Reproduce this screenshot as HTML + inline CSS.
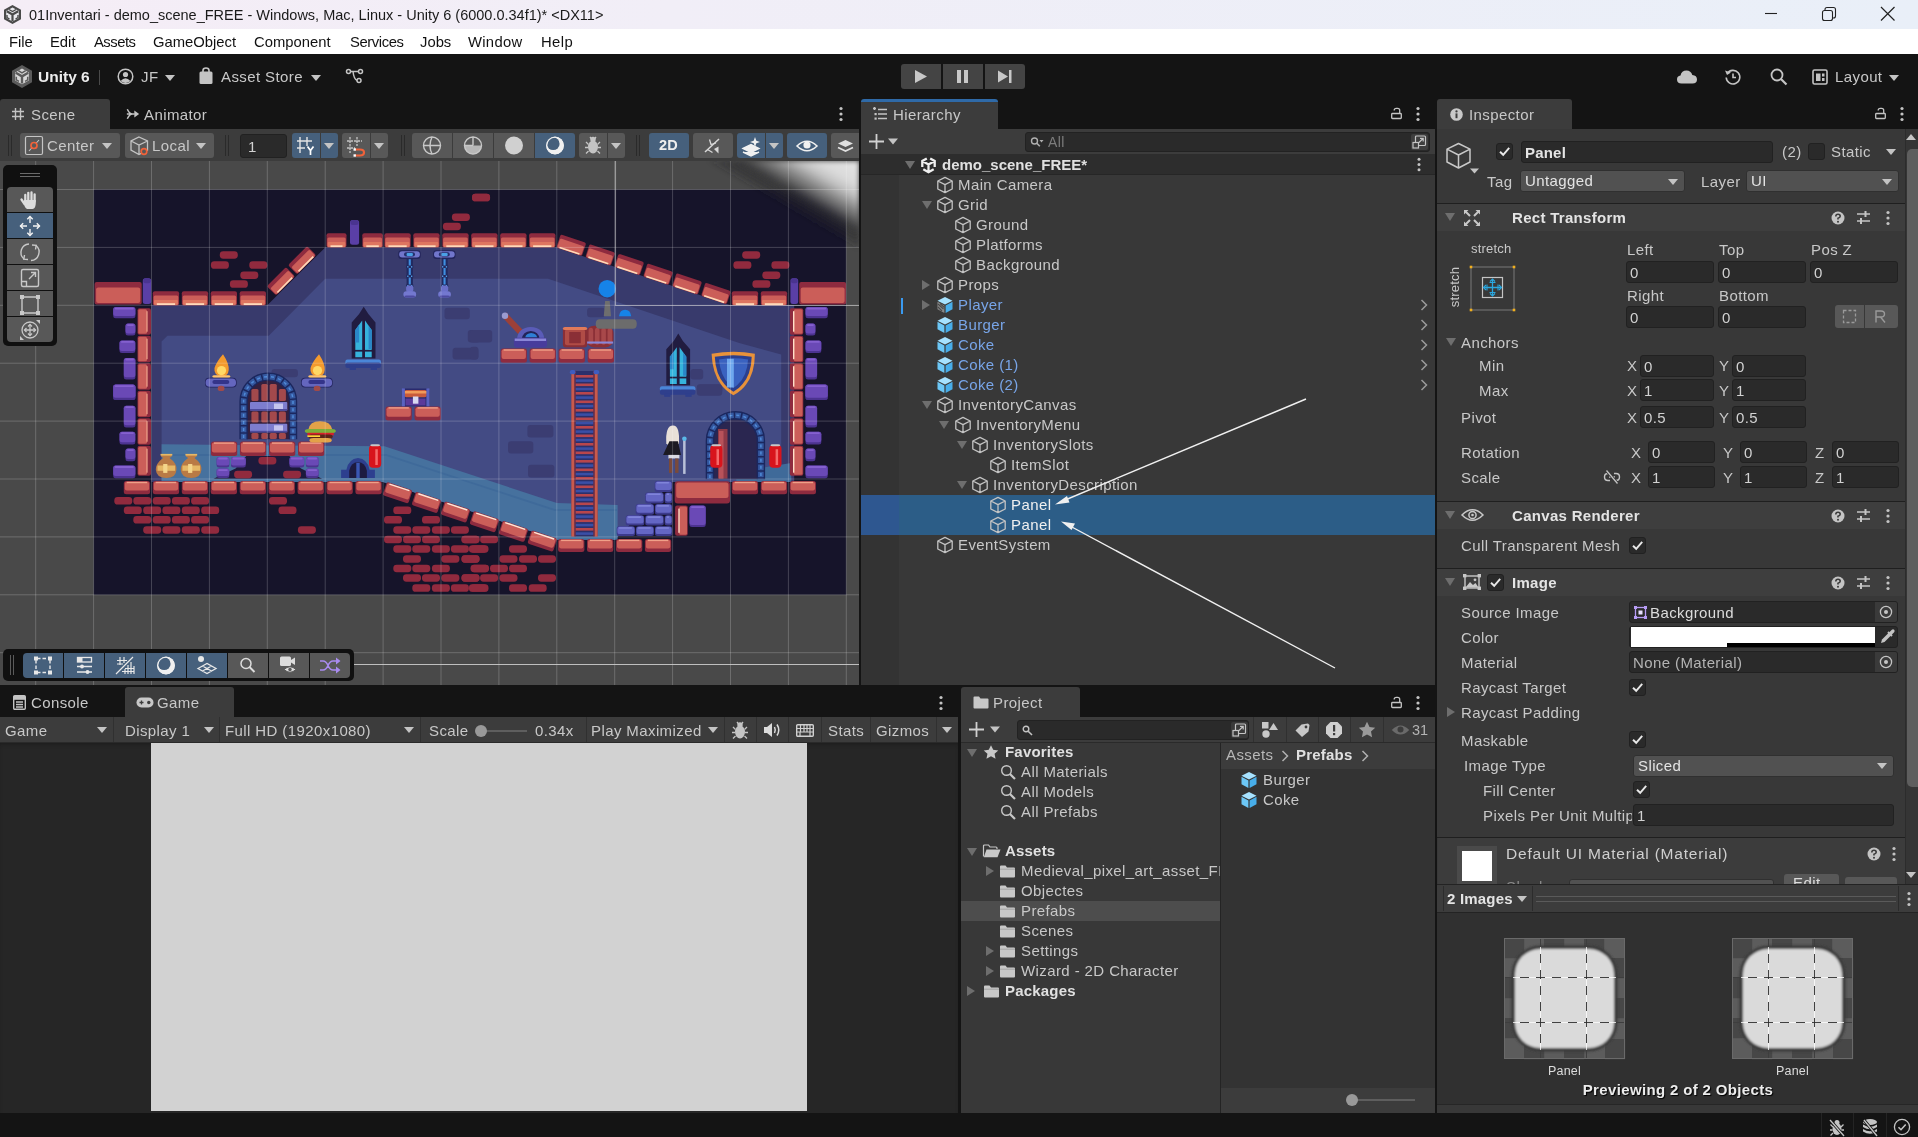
<!DOCTYPE html>
<html><head><meta charset="utf-8"><title>Unity</title>
<style>
*{box-sizing:border-box;margin:0;padding:0}
html,body{width:1918px;height:1137px;overflow:hidden;background:#141414}
body{position:relative;font-family:"Liberation Sans",sans-serif;font-size:15px;color:#c8c8c8;letter-spacing:.4px;line-height:20px}
.a{position:absolute}
.t{position:absolute;white-space:pre;height:20px;line-height:20px}
.b{font-weight:700;letter-spacing:.2px}
.btn{position:absolute;background:#585858;border-radius:3px}
.btn.on{background:#46607c}
.inp{position:absolute;background:#2a2a2a;border:1px solid #212121;border-radius:3px;height:22px;line-height:21px;padding-left:3px;white-space:pre;color:#d2d2d2}
.dd{position:absolute;background:#515151;border:1px solid #303030;border-radius:3px;height:22px;line-height:20px;padding-left:4px;white-space:pre;color:#e4e4e4}
.chk{position:absolute;width:17px;height:17px;background:#2a2a2a;border:1px solid #212121;border-radius:3px}
.tri-d{position:absolute;width:0;height:0;border-left:5px solid transparent;border-right:5px solid transparent;border-top:6px solid #c4c4c4}
.fold-d{position:absolute;width:0;height:0;margin-left:1px;border-left:5px solid transparent;border-right:5px solid transparent;border-top:8px solid #6e6e6e}
.fold-r{position:absolute;width:0;height:0;margin-top:1px;border-top:5px solid transparent;border-bottom:5px solid transparent;border-left:8px solid #6e6e6e}
svg{position:absolute;overflow:visible}
#root{position:absolute;left:0;top:0;width:1918px;height:1137px;overflow:hidden;will-change:transform}
</style></head><body><div id="root">
<!-- title bar -->
<div class="a" style="left:0;top:0;width:1918px;height:29px;background:linear-gradient(90deg,#f5edf6 0%,#f1eef7 35%,#e9eff8 100%)"></div>
<svg style="left:2px;top:4px" width="21" height="21" viewBox="0 0 21 21"><path d="M10.5 1 L19 5.8 V15.2 L10.5 20 L2 15.2 V5.8 Z" fill="#4a4a4a"/><path d="M10.5 3.5 L16.8 7 V14 L10.5 17.5 L4.2 14 V7 Z" fill="#e9e9ee"/><path d="M10.5 10.5 V17 M10.5 10.5 L4.8 7.3 M10.5 10.5 L16.2 7.3" stroke="#4a4a4a" stroke-width="2.2" fill="none"/><path d="M7 5.5 L10.5 7.5 L14 5.5 M5 11 V13.6 L7.5 15 M16 11 V13.6 L13.5 15" stroke="#4a4a4a" stroke-width="1.4" fill="none"/></svg>
<div class="t" style="left:29px;top:5px;font-size:14.5px;letter-spacing:0;color:#1a1a1a">01Inventari - demo_scene_FREE - Windows, Mac, Linux - Unity 6 (6000.0.34f1)* &lt;DX11&gt;</div>
<svg style="left:1760px;top:4px" width="140" height="20" viewBox="0 0 140 20"><path d="M5 9.5 H17" stroke="#222" stroke-width="1.1" fill="none"/><rect x="62.5" y="6.5" width="10" height="10" rx="2" stroke="#222" stroke-width="1.1" fill="none"/><path d="M65 6.5 V5.5 Q65 3.5 67 3.5 H73.5 Q75.5 3.5 75.5 5.5 V12 Q75.5 14 73.5 14 H72.5" stroke="#222" stroke-width="1.1" fill="none"/><path d="M121 3 L134.5 16.5 M134.5 3 L121 16.5" stroke="#222" stroke-width="1.2" fill="none"/></svg>
<!-- menu bar -->
<div class="a" style="left:0;top:29px;width:1918px;height:25px;background:#fff"></div>
<div class="a" style="left:0;top:32px;height:20px;font-size:14.8px;letter-spacing:0;color:#111">
<span class="t" style="left:9px">File</span><span class="t" style="left:50px">Edit</span><span class="t" style="left:94px;letter-spacing:-.5px">Assets</span><span class="t" style="left:153px">GameObject</span><span class="t" style="left:254px">Component</span><span class="t" style="left:350px;letter-spacing:-.4px">Services</span><span class="t" style="left:420px">Jobs</span><span class="t" style="left:468px;letter-spacing:.3px">Window</span><span class="t" style="left:541px;letter-spacing:.4px">Help</span>
</div>
<!-- main toolbar -->
<div class="a" style="left:0;top:54px;width:1918px;height:46px;background:#141414"></div>
<svg style="left:11px;top:64px" width="22" height="25" viewBox="0 0 22 25"><path d="M11 1 L21 6.7 V18.3 L11 24 L1 18.3 V6.7 Z" fill="#5b5b5b"/><path d="M11 4.5 L17.8 8.4 V16.4 L11 20.3 L4.2 16.4 V8.4 Z" fill="#d8d8d8"/><path d="M11 12.4 V19.6 M11 12.4 L4.8 8.8 M11 12.4 L17.2 8.8" stroke="#5b5b5b" stroke-width="2.4" fill="none"/><path d="M7.3 6.6 L11 8.8 L14.7 6.6 M5.3 12.8 V15.9 L8 17.4 M16.7 12.8 V15.9 L14 17.4" stroke="#5b5b5b" stroke-width="1.5" fill="none"/></svg>
<div class="t b" style="left:38px;top:67px;color:#ececec;font-size:15.5px;letter-spacing:0">Unity 6</div>
<div class="a" style="left:99px;top:70px;width:1px;height:15px;background:#4a4a4a"></div>
<svg style="left:117px;top:68px" width="17" height="17" viewBox="0 0 17 17"><circle cx="8.5" cy="8.5" r="7.3" stroke="#c4c4c4" stroke-width="1.5" fill="none"/><circle cx="8.5" cy="6.5" r="2.6" fill="#c4c4c4"/><path d="M3.6 13 Q8.5 7.5 13.4 13 Q8.5 17 3.6 13Z" fill="#c4c4c4"/></svg>
<div class="t" style="left:141px;top:67px">JF</div><div class="tri-d" style="left:165px;top:75px"></div>
<svg style="left:198px;top:66px" width="16" height="20" viewBox="0 0 16 20"><path d="M5 6 V4.5 Q5 2 8 2 Q11 2 11 4.5 V6" stroke="#c4c4c4" stroke-width="1.6" fill="none"/><rect x="1.5" y="5.5" width="13" height="12.5" rx="1.5" fill="#c4c4c4"/></svg>
<div class="t" style="left:221px;top:67px">Asset Store</div><div class="tri-d" style="left:311px;top:75px"></div>
<svg style="left:345px;top:67px" width="20" height="18" viewBox="0 0 20 18"><g stroke="#c4c4c4" stroke-width="1.5" fill="none"><circle cx="3.5" cy="4.5" r="2"/><circle cx="15.5" cy="4.5" r="2"/><circle cx="14" cy="13.5" r="2"/><path d="M5.5 4.5 H13.5 M8 4.5 Q9 12.5 12 13.3"/></g></svg>
<!-- play controls -->
<div class="a" style="left:901px;top:64px;width:40px;height:25px;background:#444;border-radius:3px 0 0 3px"></div>
<div class="a" style="left:943px;top:64px;width:40px;height:25px;background:#444"></div>
<div class="a" style="left:985px;top:64px;width:40px;height:25px;background:#444;border-radius:0 3px 3px 0"></div>
<svg style="left:901px;top:64px" width="124" height="25" viewBox="0 0 124 25"><path d="M14 6 L26 12.5 L14 19Z" fill="#c8c8c8"/><rect x="56" y="6" width="4" height="13" fill="#c8c8c8"/><rect x="63" y="6" width="4" height="13" fill="#c8c8c8"/><path d="M97 6.5 L107 12.5 L97 18.5Z" fill="#c8c8c8"/><rect x="108" y="6" width="2.5" height="13" fill="#c8c8c8"/></svg>
<!-- right icons -->
<svg style="left:1676px;top:69px" width="22" height="16" viewBox="0 0 22 16"><path d="M5.5 14.5 Q1 14.5 1 10.5 Q1 7 4.5 6.6 Q5.5 1.5 10.5 1.5 Q15 1.5 16.3 6 Q21 6.3 21 10.5 Q21 14.5 16.5 14.5Z" fill="#c4c4c4"/></svg>
<svg style="left:1722px;top:66px" width="22" height="22" viewBox="0 0 22 22"><path d="M5.2 7.6 A6.8 6.8 0 1 1 4.2 11.5" stroke="#c4c4c4" stroke-width="1.6" fill="none"/><path d="M3 4.5 L5 9 L9 6.500Z" fill="#c4c4c4"/><path d="M11 7.5 V11.5 H14" stroke="#c4c4c4" stroke-width="1.6" fill="none"/></svg>
<svg style="left:1769px;top:67px" width="20" height="20" viewBox="0 0 20 20"><circle cx="8" cy="8" r="5.5" stroke="#c4c4c4" stroke-width="1.8" fill="none"/><path d="M12 12 L17.5 17.5" stroke="#c4c4c4" stroke-width="2.2"/></svg>
<svg style="left:1812px;top:69px" width="16" height="16" viewBox="0 0 16 16"><rect x="1" y="1" width="14" height="14" rx="1.5" stroke="#c4c4c4" stroke-width="1.6" fill="none"/><rect x="4" y="4.5" width="4.5" height="7.5" fill="#c4c4c4"/><rect x="10" y="4.5" width="2.5" height="3" fill="#c4c4c4"/><rect x="10" y="9" width="2.5" height="3" fill="#c4c4c4"/></svg>
<div class="t" style="left:1835px;top:67px">Layout</div><div class="tri-d" style="left:1889px;top:75px"></div>
<!-- scene panel -->
<div class="a" style="left:0;top:99px;width:859px;height:30px;background:#141414"></div>
<div class="a" style="left:0;top:99px;width:110px;height:31px;background:#3c3c3c;border-radius:3px 3px 0 0"></div>
<svg style="left:11px;top:107px" width="14" height="14" viewBox="0 0 14 14"><path d="M4.5 1 V13 M9.5 1 V13 M1 4.5 H13 M1 9.5 H13" stroke="#c4c4c4" stroke-width="1.4" fill="none"/></svg>
<div class="t" style="left:31px;top:105px">Scene</div>
<svg style="left:126px;top:108px" width="14" height="12" viewBox="0 0 16 13"><path d="M1 6.5 H10 M1.5 1 Q4 6.5 7.5 6.5 M1.5 12 Q4 6.5 7.5 6.5" stroke="#c4c4c4" stroke-width="1.7" fill="none"/><path d="M9.5 2.5 L15 6.5 L9.5 10.5Z" fill="#c4c4c4"/></svg>
<div class="t" style="left:144px;top:105px">Animator</div>
<svg style="left:839px;top:106px" width="4" height="16" viewBox="0 0 4 16"><circle cx="2" cy="2.5" r="1.6" fill="#c4c4c4"/><circle cx="2" cy="8" r="1.6" fill="#c4c4c4"/><circle cx="2" cy="13.5" r="1.6" fill="#c4c4c4"/></svg>
<div class="a" style="left:0;top:129px;width:859px;height:32px;background:#3c3c3c"></div>
<div class="a" style="left:8px;top:135px;width:1px;height:21px;background:#2a2a2a"></div><div class="a" style="left:11px;top:135px;width:1px;height:21px;background:#2a2a2a"></div>
<div class="a" style="left:225px;top:135px;width:1px;height:21px;background:#2a2a2a"></div><div class="a" style="left:228px;top:135px;width:1px;height:21px;background:#2a2a2a"></div>
<div class="a" style="left:401px;top:135px;width:1px;height:21px;background:#2a2a2a"></div><div class="a" style="left:404px;top:135px;width:1px;height:21px;background:#2a2a2a"></div>
<div class="a" style="left:636px;top:135px;width:1px;height:21px;background:#2a2a2a"></div><div class="a" style="left:639px;top:135px;width:1px;height:21px;background:#2a2a2a"></div>
<div class="btn" style="left:20px;top:133px;width:100px;height:25px;border-radius:3px"></div>
<div class="btn" style="left:125px;top:133px;width:89px;height:25px;border-radius:3px"></div>
<div class="inp" style="left:240px;top:134px;width:47px;height:24px;line-height:23px;padding-left:7px">1</div>
<div class="btn on" style="left:292px;top:133px;width:28px;height:25px;border-radius:3px 0 0 3px"></div>
<div class="btn on" style="left:321px;top:133px;width:17px;height:25px;border-radius:0 3px 3px 0"></div>
<div class="btn" style="left:342px;top:133px;width:28px;height:25px;border-radius:3px 0 0 3px"></div>
<div class="btn" style="left:371px;top:133px;width:17px;height:25px;border-radius:0 3px 3px 0"></div>
<div class="btn" style="left:412px;top:133px;width:40px;height:25px;border-radius:3px 0 0 3px"></div>
<div class="btn" style="left:453px;top:133px;width:40px;height:25px;border-radius:0"></div>
<div class="btn" style="left:494px;top:133px;width:40px;height:25px;border-radius:0"></div>
<div class="btn on" style="left:535px;top:133px;width:40px;height:25px;border-radius:0 3px 3px 0"></div>
<div class="btn" style="left:579px;top:133px;width:28px;height:25px;border-radius:3px 0 0 3px"></div>
<div class="btn" style="left:608px;top:133px;width:17px;height:25px;border-radius:0 3px 3px 0"></div>
<div class="btn on" style="left:649px;top:133px;width:40px;height:25px;border-radius:3px"></div>
<div class="btn" style="left:693px;top:133px;width:40px;height:25px;border-radius:3px"></div>
<div class="btn on" style="left:737px;top:133px;width:28px;height:25px;border-radius:3px 0 0 3px"></div>
<div class="btn on" style="left:766px;top:133px;width:17px;height:25px;border-radius:0 3px 3px 0"></div>
<div class="btn on" style="left:787px;top:133px;width:40px;height:25px;border-radius:3px"></div>
<div class="btn" style="left:831px;top:133px;width:28px;height:25px;border-radius:3px 0 0 3px"></div>
<div class="t" style="left:47px;top:136px;color:#c8c8c8">Center</div><div class="tri-d" style="left:102px;top:143px"></div>
<div class="t" style="left:152px;top:136px;color:#c8c8c8">Local</div><div class="tri-d" style="left:196px;top:143px"></div>
<div class="tri-d" style="left:324px;top:143px"></div>
<div class="tri-d" style="left:374px;top:143px"></div>
<div class="tri-d" style="left:611px;top:143px"></div>
<div class="tri-d" style="left:769px;top:143px"></div>
<div class="t b" style="left:659px;top:135px;color:#eee;font-size:14.5px">2D</div>
<svg style="left:0;top:129px" width="859" height="32" viewBox="0 129 859 32">
<rect x="25.5" y="136.5" width="17" height="18" rx="1.5" stroke="#c4c4c4" stroke-width="1.2" fill="none"/><path d="M29 151 L39 140" stroke="#c4c4c4" stroke-width="1.1"/><circle cx="34" cy="145.5" r="3" stroke="#f0623a" stroke-width="1.7" fill="#585858"/>
<path d="M139 137 L147.5 141 V150 L139 154.5 L131 150 V141 Z M131 141 L139 145 L147.5 141 M139 145 V154.5" stroke="#c4c4c4" stroke-width="1.3" fill="none"/><circle cx="144" cy="151.5" r="2.8" stroke="#f0623a" stroke-width="1.7" fill="#585858"/>
<path d="M300 137 V153 M307 137 V146 M297 141 H312 M297 148 H305" stroke="#e4e4e4" stroke-width="1.4" fill="none"/><path d="M307.5 146.5 L310.5 150.5 L313.5 146.5 M310.5 150.5 V155" stroke="#fff" stroke-width="1.7" fill="none"/>
<path d="M350 137 V153 M357 137 V146 M347 141 H362 M347 148 H355" stroke="#c4c4c4" stroke-width="1.3" stroke-dasharray="2.5 1" fill="none"/><path d="M355 149.5 H360 Q364 149.5 364 152.5 Q364 155.5 360 155.5 H355" stroke="#f0623a" stroke-width="2.2" fill="none"/><rect x="353.5" y="148.3" width="2.4" height="2.4" fill="#fff"/><rect x="353.5" y="154.3" width="2.4" height="2.4" fill="#fff"/>
<g stroke="#c8c8c8" stroke-width="1.4" fill="none"><circle cx="432" cy="145.5" r="8.5"/><path d="M423.5 145.5 H440.5 M432 137 Q428 145.5 432 154"/>
<circle cx="473" cy="145.5" r="8.5"/><path d="M464.5 145.5 H473 M473 137 V145.5"/></g><path d="M473 145.5 H481.5 A8.5 8.5 0 0 1 464.5 145.5 H473Z" fill="#c8c8c8" opacity=".85"/>
<circle cx="514" cy="145.5" r="9" fill="#d0d0d0"/>
<circle cx="555" cy="145.5" r="8.8" fill="#f0f0f0"/><circle cx="553.2" cy="143.7" r="6.4" fill="#46607c"/><circle cx="555" cy="145.5" r="8.3" stroke="#f0f0f0" stroke-width="1.2" fill="none"/>
<ellipse cx="593" cy="147" rx="5" ry="6.5" fill="#c4c4c4"/><circle cx="593" cy="139.5" r="2.7" fill="#c4c4c4"/><path d="M586 142 L588.5 144.5 M600 142 L597.5 144.5 M585 147.5 H588 M601 147.5 H598 M586 153.5 L588.5 151 M600 153.5 L597.5 151 M590 137 L591.5 139 M596 137 L594.5 139" stroke="#c4c4c4" stroke-width="1.3"/>
<path d="M705 152 L719 139" stroke="#d8d8d8" stroke-width="1.5"/><path d="M709.5 139.5 L711 144.5 L716 143 M707.5 149.5 L712.5 152.5" stroke="#d8d8d8" stroke-width="1.3" fill="none"/><path d="M714 149 L718.5 146.5 V153.500Z" fill="#d8d8d8"/>
<path d="M743 148.5 L751 144.5 L759 148.5 L751 152.500Z M743 152 L751 156 L759 152" stroke="#f0f0f0" stroke-width="1.4" fill="#f0f0f0"/><path d="M755 137 L756.3 140.7 L760 142 L756.3 143.3 L755 147 L753.7 143.3 L750 142 L753.7 140.700Z" fill="#f0f0f0"/>
<path d="M797 146 Q807 136.5 817 146 Q807 155.5 797 146Z" stroke="#f0f0f0" stroke-width="1.6" fill="none"/><circle cx="807" cy="145" r="3.6" fill="#f0f0f0"/>
<path d="M838 143.5 L845.5 140 L853 143.5 L845.5 147Z" fill="#e0e0e0"/><path d="M838 147.5 L845.5 151 L853 147.5" stroke="#e0e0e0" stroke-width="1.7" fill="none"/>
</svg>
<div class="a" style="left:0;top:161px;width:859px;height:524px;background:#494949;overflow:hidden">
<svg style="left:0;top:0" width="859" height="524" viewBox="0 161 859 524">
<defs><filter id="bl" x="-50%" y="-50%" width="200%" height="200%"><feGaussianBlur stdDeviation="12"/></filter><filter id="bl2" x="-10%" y="-10%" width="120%" height="120%"><feGaussianBlur stdDeviation="2.5"/></filter></defs>
<rect x="93.6" y="189.5" width="752.7" height="405.3" fill="#16142a"/>
<polygon points="151.5,305.3 267.3,305.3 325.2,247.4 556.8,247.4 730.5,305.3 794.2,305.3 794.2,481.9 730.5,481.9 672.6,481.9 614.7,539.8 556.8,539.8 383.1,481.9 151.5,481.9" fill="#383a6c"/>
<polygon points="167.4,335.7 268.7,335.7 325.2,278.7 548.1,278.7 739.2,342.9 781.2,354.5 781.2,481.9 672.6,481.9 614.7,539.8 556.8,539.8 383.1,481.9 161.6,481.9 161.6,341.5" fill="#434b84"/>
<polygon points="161.6,444.3 384.5,446.3 556.8,503 617.6,505.1 617.6,539.8 556.8,539.8 383.1,481.9 161.6,481.9" fill="#46719e"/>
<path d="M161.6 455H386L555 510H617" stroke="#3f6a9a" stroke-width="1.8" fill="none"/>
<polygon points="736.3,471.8 791.3,463.1 791.3,481.9 736.3,481.9" fill="#3f6a99"/>
<rect x="444.5" y="307.7" width="25.3" height="11.6" fill="#3b3d72" rx="3"/>
<rect x="467.8" y="329.9" width="12.2" height="12.7" fill="#3b3d72" rx="3"/>
<rect x="452.6" y="347.8" width="25.7" height="11.6" fill="#3b3d72" rx="3"/>
<rect x="271.5" y="368.9" width="26.4" height="8.4" fill="#3b3d72" rx="3"/>
<rect x="470" y="329.9" width="22.2" height="12.7" fill="#3b3d72" rx="3"/>
<rect x="470" y="346.8" width="8.4" height="12.7" fill="#3b3d72" rx="3"/>
<rect x="587.1" y="307.7" width="17.9" height="9.5" fill="#3b3d72" rx="3"/>
<rect x="690.5" y="368.9" width="12.7" height="10.6" fill="#3b3d72" rx="3"/>
<rect x="696.9" y="384.8" width="25.3" height="8.4" fill="#3b3d72" rx="3"/>
<rect x="527.4" y="425" width="26" height="12.5" fill="#3b3d72" rx="3"/>
<rect x="508" y="441.2" width="25.3" height="12.2" fill="#3b3d72" rx="3"/>
<rect x="528" y="464.8" width="26.4" height="12.7" fill="#3b3d72" rx="3"/>
<rect x="696.9" y="384.2" width="25.3" height="11.6" fill="#3b3d72" rx="3"/>
<rect x="219.8" y="251.2" width="18" height="7.5" fill="#912a3e" rx="3.4"/>
<rect x="210.9" y="261.3" width="18" height="7.5" fill="#912a3e" rx="3.4"/>
<rect x="249.3" y="261.3" width="18" height="7.5" fill="#912a3e" rx="3.4"/>
<rect x="240.3" y="271.4" width="18" height="7.5" fill="#912a3e" rx="3.4"/>
<rect x="229.9" y="280.3" width="18" height="7.5" fill="#912a3e" rx="3.4"/>
<rect x="451.9" y="213.4" width="18" height="7.5" fill="#912a3e" rx="3.4"/>
<rect x="442.9" y="222.7" width="18" height="7.5" fill="#912a3e" rx="3.4"/>
<rect x="472" y="193.8" width="18" height="7.5" fill="#912a3e" rx="3.4"/>
<rect x="472.1" y="193.8" width="18" height="7.5" fill="#912a3e" rx="3.4"/>
<rect x="742.2" y="251.2" width="18" height="7.5" fill="#912a3e" rx="3.4"/>
<rect x="733.4" y="261.3" width="18" height="7.5" fill="#912a3e" rx="3.4"/>
<rect x="771.4" y="261.3" width="18" height="7.5" fill="#912a3e" rx="3.4"/>
<rect x="762.3" y="271.4" width="18" height="7.5" fill="#912a3e" rx="3.4"/>
<rect x="752.4" y="280.3" width="18" height="7.5" fill="#912a3e" rx="3.4"/>
<rect x="114.3" y="497.1" width="18" height="7.5" fill="#912a3e" rx="3.4"/>
<rect x="133.3" y="497.1" width="18" height="7.5" fill="#912a3e" rx="3.4"/>
<rect x="152.7" y="497.1" width="18" height="7.5" fill="#912a3e" rx="3.4"/>
<rect x="171.9" y="497.1" width="18" height="7.5" fill="#912a3e" rx="3.4"/>
<rect x="191.1" y="497.1" width="18" height="7.5" fill="#912a3e" rx="3.4"/>
<rect x="123.8" y="506.6" width="18" height="7.5" fill="#912a3e" rx="3.4"/>
<rect x="143.2" y="506.6" width="18" height="7.5" fill="#912a3e" rx="3.4"/>
<rect x="162.4" y="506.6" width="18" height="7.5" fill="#912a3e" rx="3.4"/>
<rect x="181.8" y="506.6" width="18" height="7.5" fill="#912a3e" rx="3.4"/>
<rect x="201.2" y="506.6" width="18" height="7.5" fill="#912a3e" rx="3.4"/>
<rect x="133.3" y="516.1" width="18" height="7.5" fill="#912a3e" rx="3.4"/>
<rect x="152.7" y="516.1" width="18" height="7.5" fill="#912a3e" rx="3.4"/>
<rect x="171.9" y="516.1" width="18" height="7.5" fill="#912a3e" rx="3.4"/>
<rect x="191.1" y="516.1" width="18" height="7.5" fill="#912a3e" rx="3.4"/>
<rect x="143.2" y="526.2" width="18" height="7.5" fill="#912a3e" rx="3.4"/>
<rect x="162.4" y="526.2" width="18" height="7.5" fill="#912a3e" rx="3.4"/>
<rect x="181.8" y="526.2" width="18" height="7.5" fill="#912a3e" rx="3.4"/>
<rect x="201.2" y="526.2" width="18" height="7.5" fill="#912a3e" rx="3.4"/>
<rect x="269" y="497.1" width="18" height="7.5" fill="#912a3e" rx="3.4"/>
<rect x="278.5" y="506.6" width="18" height="7.5" fill="#912a3e" rx="3.4"/>
<rect x="297.9" y="526.2" width="18" height="7.5" fill="#912a3e" rx="3.4"/>
<rect x="393.3" y="506.6" width="18" height="7.5" fill="#912a3e" rx="3.4"/>
<rect x="384" y="516.1" width="18" height="7.5" fill="#912a3e" rx="3.4"/>
<rect x="422" y="516.1" width="18" height="7.5" fill="#912a3e" rx="3.4"/>
<rect x="393.3" y="526.2" width="18" height="7.5" fill="#912a3e" rx="3.4"/>
<rect x="412.3" y="526.2" width="18" height="7.5" fill="#912a3e" rx="3.4"/>
<rect x="431.9" y="526.2" width="18" height="7.5" fill="#912a3e" rx="3.4"/>
<rect x="450.9" y="526.2" width="18" height="7.5" fill="#912a3e" rx="3.4"/>
<rect x="384" y="535.7" width="18" height="7.5" fill="#912a3e" rx="3.4"/>
<rect x="403" y="535.7" width="18" height="7.5" fill="#912a3e" rx="3.4"/>
<rect x="422" y="535.7" width="18" height="7.5" fill="#912a3e" rx="3.4"/>
<rect x="461.4" y="535.7" width="18" height="7.5" fill="#912a3e" rx="3.4"/>
<rect x="393.3" y="545.2" width="18" height="7.5" fill="#912a3e" rx="3.4"/>
<rect x="412.3" y="545.2" width="18" height="7.5" fill="#912a3e" rx="3.4"/>
<rect x="431.9" y="545.2" width="18" height="7.5" fill="#912a3e" rx="3.4"/>
<rect x="450.9" y="545.2" width="18" height="7.5" fill="#912a3e" rx="3.4"/>
<rect x="470.5" y="545.2" width="18" height="7.5" fill="#912a3e" rx="3.4"/>
<rect x="403" y="555.2" width="18" height="7.5" fill="#912a3e" rx="3.4"/>
<rect x="441.4" y="555.2" width="18" height="7.5" fill="#912a3e" rx="3.4"/>
<rect x="461.4" y="555.2" width="18" height="7.5" fill="#912a3e" rx="3.4"/>
<rect x="393.3" y="564.7" width="18" height="7.5" fill="#912a3e" rx="3.4"/>
<rect x="412.3" y="564.7" width="18" height="7.5" fill="#912a3e" rx="3.4"/>
<rect x="431.9" y="564.7" width="18" height="7.5" fill="#912a3e" rx="3.4"/>
<rect x="470.5" y="564.7" width="18" height="7.5" fill="#912a3e" rx="3.4"/>
<rect x="403" y="574.2" width="18" height="7.5" fill="#912a3e" rx="3.4"/>
<rect x="422" y="574.2" width="18" height="7.5" fill="#912a3e" rx="3.4"/>
<rect x="441.4" y="574.2" width="18" height="7.5" fill="#912a3e" rx="3.4"/>
<rect x="461.4" y="574.2" width="18" height="7.5" fill="#912a3e" rx="3.4"/>
<rect x="412.3" y="584.3" width="18" height="7.5" fill="#912a3e" rx="3.4"/>
<rect x="431.9" y="584.3" width="18" height="7.5" fill="#912a3e" rx="3.4"/>
<rect x="450.9" y="584.3" width="18" height="7.5" fill="#912a3e" rx="3.4"/>
<rect x="470.5" y="584.3" width="18" height="7.5" fill="#912a3e" rx="3.4"/>
<rect x="461.6" y="535.7" width="18" height="7.5" fill="#912a3e" rx="3.4"/>
<rect x="480.1" y="535.7" width="18" height="7.5" fill="#912a3e" rx="3.4"/>
<rect x="468.9" y="545.2" width="18" height="7.5" fill="#912a3e" rx="3.4"/>
<rect x="509" y="545.2" width="18" height="7.5" fill="#912a3e" rx="3.4"/>
<rect x="461.6" y="555.2" width="18" height="7.5" fill="#912a3e" rx="3.4"/>
<rect x="499.5" y="555.2" width="18" height="7.5" fill="#912a3e" rx="3.4"/>
<rect x="519" y="555.2" width="18" height="7.5" fill="#912a3e" rx="3.4"/>
<rect x="538" y="555.2" width="18" height="7.5" fill="#912a3e" rx="3.4"/>
<rect x="471.1" y="564.7" width="18" height="7.5" fill="#912a3e" rx="3.4"/>
<rect x="490" y="564.7" width="18" height="7.5" fill="#912a3e" rx="3.4"/>
<rect x="509" y="564.7" width="18" height="7.5" fill="#912a3e" rx="3.4"/>
<rect x="461.6" y="574.2" width="18" height="7.5" fill="#912a3e" rx="3.4"/>
<rect x="480.1" y="574.2" width="18" height="7.5" fill="#912a3e" rx="3.4"/>
<rect x="499.5" y="574.2" width="18" height="7.5" fill="#912a3e" rx="3.4"/>
<rect x="538" y="574.2" width="18" height="7.5" fill="#912a3e" rx="3.4"/>
<rect x="468.9" y="584.3" width="18" height="7.5" fill="#912a3e" rx="3.4"/>
<rect x="509" y="584.3" width="18" height="7.5" fill="#912a3e" rx="3.4"/>
<rect x="528.7" y="584.3" width="18" height="7.5" fill="#912a3e" rx="3.4"/>
<rect x="258.4" y="457" width="18" height="7.5" fill="#912a3e" rx="3.4"/>
<rect x="234.1" y="470.7" width="18" height="7.5" fill="#912a3e" rx="3.4"/>
<rect x="283.1" y="470.7" width="18" height="7.5" fill="#912a3e" rx="3.4"/>
<rect x="94.6" y="282" width="47.1" height="22.6" fill="#8e2b3f" rx="2"/>
<rect x="96.1" y="287.5" width="44.1" height="15.6" fill="#cb5e59" rx="2"/>
<rect x="799.2" y="282" width="46.9" height="22.6" fill="#8e2b3f" rx="2"/>
<rect x="800.7" y="287.5" width="43.9" height="15.6" fill="#cb5e59" rx="2"/>
<rect x="142.8" y="278.2" width="8.4" height="25.7" fill="#5a3fa6" rx="2.5"/>
<rect x="143.3" y="278.2" width="7.4" height="5" fill="#4a3490" rx="2.5"/>
<rect x="350" y="220.1" width="9.1" height="24.7" fill="#5a3fa6" rx="2.5"/>
<rect x="350.5" y="220.1" width="8.1" height="5" fill="#4a3490" rx="2.5"/>
<rect x="790.4" y="278.2" width="7.8" height="25.7" fill="#5a3fa6" rx="2.5"/>
<rect x="790.9" y="278.2" width="6.8" height="5" fill="#4a3490" rx="2.5"/>
<rect x="152.8" y="291.2" width="26.3" height="14.2" fill="#8e2b3f" rx="2"/>
<rect x="153.6" y="295.4" width="24.7" height="9.4" fill="#cb5e59" rx="1.5"/>
<rect x="154" y="299.9" width="23.9" height="4.9" fill="#de7560" rx="1"/>
<rect x="156.8" y="303.2" width="18.3" height="1.8" fill="#ffd9b8"/>
<rect x="181.8" y="291.2" width="26.3" height="14.2" fill="#8e2b3f" rx="2"/>
<rect x="182.6" y="295.4" width="24.7" height="9.4" fill="#cb5e59" rx="1.5"/>
<rect x="182.9" y="299.9" width="23.9" height="4.9" fill="#de7560" rx="1"/>
<rect x="185.8" y="303.2" width="18.3" height="1.8" fill="#ffd9b8"/>
<rect x="210.7" y="291.2" width="26.3" height="14.2" fill="#8e2b3f" rx="2"/>
<rect x="211.5" y="295.4" width="24.7" height="9.4" fill="#cb5e59" rx="1.5"/>
<rect x="211.9" y="299.9" width="23.9" height="4.9" fill="#de7560" rx="1"/>
<rect x="214.7" y="303.2" width="18.3" height="1.8" fill="#ffd9b8"/>
<rect x="239.7" y="291.2" width="26.3" height="14.2" fill="#8e2b3f" rx="2"/>
<rect x="240.5" y="295.4" width="24.7" height="9.4" fill="#cb5e59" rx="1.5"/>
<rect x="240.8" y="299.9" width="23.9" height="4.9" fill="#de7560" rx="1"/>
<rect x="243.7" y="303.2" width="18.3" height="1.8" fill="#ffd9b8"/>
<rect x="326.5" y="233.3" width="20" height="14.2" fill="#8e2b3f" rx="2"/>
<rect x="327.3" y="237.5" width="18.4" height="9.4" fill="#cb5e59" rx="1.5"/>
<rect x="327.7" y="242" width="17.6" height="4.9" fill="#de7560" rx="1"/>
<rect x="330.5" y="245.3" width="12" height="1.8" fill="#ffd9b8"/>
<rect x="362.3" y="233.3" width="20.5" height="14.2" fill="#8e2b3f" rx="2"/>
<rect x="363.1" y="237.5" width="18.9" height="9.4" fill="#cb5e59" rx="1.5"/>
<rect x="363.5" y="242" width="18.1" height="4.9" fill="#de7560" rx="1"/>
<rect x="366.3" y="245.3" width="12.5" height="1.8" fill="#ffd9b8"/>
<rect x="384.4" y="233.3" width="26.3" height="14.2" fill="#8e2b3f" rx="2"/>
<rect x="385.2" y="237.5" width="24.7" height="9.4" fill="#cb5e59" rx="1.5"/>
<rect x="385.6" y="242" width="23.9" height="4.9" fill="#de7560" rx="1"/>
<rect x="388.4" y="245.3" width="18.3" height="1.8" fill="#ffd9b8"/>
<rect x="413.3" y="233.3" width="26.3" height="14.2" fill="#8e2b3f" rx="2"/>
<rect x="414.1" y="237.5" width="24.7" height="9.4" fill="#cb5e59" rx="1.5"/>
<rect x="414.5" y="242" width="23.9" height="4.9" fill="#de7560" rx="1"/>
<rect x="417.3" y="245.3" width="18.3" height="1.8" fill="#ffd9b8"/>
<rect x="442.3" y="233.3" width="26.3" height="14.2" fill="#8e2b3f" rx="2"/>
<rect x="443.1" y="237.5" width="24.7" height="9.4" fill="#cb5e59" rx="1.5"/>
<rect x="443.5" y="242" width="23.9" height="4.9" fill="#de7560" rx="1"/>
<rect x="446.3" y="245.3" width="18.3" height="1.8" fill="#ffd9b8"/>
<rect x="471.2" y="233.3" width="26.3" height="14.2" fill="#8e2b3f" rx="2"/>
<rect x="472" y="237.5" width="24.7" height="9.4" fill="#cb5e59" rx="1.5"/>
<rect x="472.4" y="242" width="23.9" height="4.9" fill="#de7560" rx="1"/>
<rect x="475.2" y="245.3" width="18.3" height="1.8" fill="#ffd9b8"/>
<rect x="500.2" y="233.3" width="26.3" height="14.2" fill="#8e2b3f" rx="2"/>
<rect x="501" y="237.5" width="24.7" height="9.4" fill="#cb5e59" rx="1.5"/>
<rect x="501.4" y="242" width="23.9" height="4.9" fill="#de7560" rx="1"/>
<rect x="504.2" y="245.3" width="18.3" height="1.8" fill="#ffd9b8"/>
<rect x="529.1" y="233.3" width="26.3" height="14.2" fill="#8e2b3f" rx="2"/>
<rect x="529.9" y="237.5" width="24.7" height="9.4" fill="#cb5e59" rx="1.5"/>
<rect x="530.4" y="242" width="23.9" height="4.9" fill="#de7560" rx="1"/>
<rect x="533.1" y="245.3" width="18.3" height="1.8" fill="#ffd9b8"/>
<rect x="731.8" y="291.2" width="26.3" height="14.2" fill="#8e2b3f" rx="2"/>
<rect x="732.6" y="295.4" width="24.7" height="9.4" fill="#cb5e59" rx="1.5"/>
<rect x="733" y="299.9" width="23.9" height="4.9" fill="#de7560" rx="1"/>
<rect x="735.8" y="303.2" width="18.3" height="1.8" fill="#ffd9b8"/>
<rect x="760.8" y="291.2" width="26.3" height="14.2" fill="#8e2b3f" rx="2"/>
<rect x="761.5" y="295.4" width="24.7" height="9.4" fill="#cb5e59" rx="1.5"/>
<rect x="762" y="299.9" width="23.9" height="4.9" fill="#de7560" rx="1"/>
<rect x="764.8" y="303.2" width="18.3" height="1.8" fill="#ffd9b8"/>
<g transform="translate(281 281.3) rotate(-45)">
<rect x="-13.5" y="-6.5" width="27" height="13" fill="#8e2b3f" rx="2"/>
<rect x="-12.7" y="-2.5" width="25.4" height="8.5" fill="#cb5e59" rx="1.5"/>
<rect x="-10.5" y="4.5" width="21" height="1.7" fill="#ffd9b8"/>
</g>
<g transform="translate(302.1 260.2) rotate(-45)">
<rect x="-13.5" y="-6.5" width="27" height="13" fill="#8e2b3f" rx="2"/>
<rect x="-12.7" y="-2.5" width="25.4" height="8.5" fill="#cb5e59" rx="1.5"/>
<rect x="-10.5" y="4.5" width="21" height="1.7" fill="#ffd9b8"/>
</g>
<g transform="translate(571.3 245.2) rotate(18.4)">
<rect x="-13.5" y="-7" width="27" height="14" fill="#8e2b3f" rx="2"/>
<rect x="-12.7" y="-3" width="25.4" height="9.5" fill="#cb5e59" rx="1.5"/>
<rect x="-10.5" y="5" width="21" height="1.7" fill="#ffd9b8"/>
</g>
<g transform="translate(600.2 254.9) rotate(18.4)">
<rect x="-13.5" y="-7" width="27" height="14" fill="#8e2b3f" rx="2"/>
<rect x="-12.7" y="-3" width="25.4" height="9.5" fill="#cb5e59" rx="1.5"/>
<rect x="-10.5" y="5" width="21" height="1.7" fill="#ffd9b8"/>
</g>
<g transform="translate(629.2 264.6) rotate(18.4)">
<rect x="-13.5" y="-7" width="27" height="14" fill="#8e2b3f" rx="2"/>
<rect x="-12.7" y="-3" width="25.4" height="9.5" fill="#cb5e59" rx="1.5"/>
<rect x="-10.5" y="5" width="21" height="1.7" fill="#ffd9b8"/>
</g>
<g transform="translate(658.1 274.2) rotate(18.4)">
<rect x="-13.5" y="-7" width="27" height="14" fill="#8e2b3f" rx="2"/>
<rect x="-12.7" y="-3" width="25.4" height="9.5" fill="#cb5e59" rx="1.5"/>
<rect x="-10.5" y="5" width="21" height="1.7" fill="#ffd9b8"/>
</g>
<g transform="translate(687.1 283.9) rotate(18.4)">
<rect x="-13.5" y="-7" width="27" height="14" fill="#8e2b3f" rx="2"/>
<rect x="-12.7" y="-3" width="25.4" height="9.5" fill="#cb5e59" rx="1.5"/>
<rect x="-10.5" y="5" width="21" height="1.7" fill="#ffd9b8"/>
</g>
<g transform="translate(716 293.5) rotate(18.4)">
<rect x="-13.5" y="-7" width="27" height="14" fill="#8e2b3f" rx="2"/>
<rect x="-12.7" y="-3" width="25.4" height="9.5" fill="#cb5e59" rx="1.5"/>
<rect x="-10.5" y="5" width="21" height="1.7" fill="#ffd9b8"/>
</g>
<rect x="137.5" y="308.2" width="13.5" height="26.5" fill="#8e2b3f" rx="2"/>
<rect x="138.3" y="309.2" width="8.7" height="24.5" fill="#cb5e59" rx="1.5"/>
<rect x="146.4" y="311.2" width="1.2" height="20.5" fill="#f0a58c"/>
<rect x="789.8" y="308.2" width="13.5" height="26.5" fill="#8e2b3f" rx="2"/>
<rect x="793.8" y="309.2" width="8.7" height="24.5" fill="#cb5e59" rx="1.5"/>
<rect x="793" y="311.2" width="1.4" height="20.5" fill="#ffe0c8"/>
<rect x="137.5" y="335.7" width="13.5" height="26.5" fill="#8e2b3f" rx="2"/>
<rect x="138.3" y="336.7" width="8.7" height="24.5" fill="#cb5e59" rx="1.5"/>
<rect x="146.4" y="338.7" width="1.2" height="20.5" fill="#f0a58c"/>
<rect x="789.8" y="335.7" width="13.5" height="26.5" fill="#8e2b3f" rx="2"/>
<rect x="793.8" y="336.7" width="8.7" height="24.5" fill="#cb5e59" rx="1.5"/>
<rect x="793" y="338.7" width="1.4" height="20.5" fill="#ffe0c8"/>
<rect x="137.5" y="363.2" width="13.5" height="26.5" fill="#8e2b3f" rx="2"/>
<rect x="138.3" y="364.2" width="8.7" height="24.5" fill="#cb5e59" rx="1.5"/>
<rect x="146.4" y="366.2" width="1.2" height="20.5" fill="#f0a58c"/>
<rect x="789.8" y="363.2" width="13.5" height="26.5" fill="#8e2b3f" rx="2"/>
<rect x="793.8" y="364.2" width="8.7" height="24.5" fill="#cb5e59" rx="1.5"/>
<rect x="793" y="366.2" width="1.4" height="20.5" fill="#ffe0c8"/>
<rect x="137.5" y="390.7" width="13.5" height="26.5" fill="#8e2b3f" rx="2"/>
<rect x="138.3" y="391.7" width="8.7" height="24.5" fill="#cb5e59" rx="1.5"/>
<rect x="146.4" y="393.7" width="1.2" height="20.5" fill="#f0a58c"/>
<rect x="789.8" y="390.7" width="13.5" height="26.5" fill="#8e2b3f" rx="2"/>
<rect x="793.8" y="391.7" width="8.7" height="24.5" fill="#cb5e59" rx="1.5"/>
<rect x="793" y="393.7" width="1.4" height="20.5" fill="#ffe0c8"/>
<rect x="137.5" y="418.2" width="13.5" height="26.5" fill="#8e2b3f" rx="2"/>
<rect x="138.3" y="419.2" width="8.7" height="24.5" fill="#cb5e59" rx="1.5"/>
<rect x="146.4" y="421.2" width="1.2" height="20.5" fill="#f0a58c"/>
<rect x="789.8" y="418.2" width="13.5" height="26.5" fill="#8e2b3f" rx="2"/>
<rect x="793.8" y="419.2" width="8.7" height="24.5" fill="#cb5e59" rx="1.5"/>
<rect x="793" y="421.2" width="1.4" height="20.5" fill="#ffe0c8"/>
<rect x="137.5" y="445.7" width="13.5" height="30" fill="#8e2b3f" rx="2"/>
<rect x="138.3" y="446.7" width="8.7" height="28" fill="#cb5e59" rx="1.5"/>
<rect x="146.4" y="448.7" width="1.2" height="24" fill="#f0a58c"/>
<rect x="789.8" y="445.7" width="13.5" height="30" fill="#8e2b3f" rx="2"/>
<rect x="793.8" y="446.7" width="8.7" height="28" fill="#cb5e59" rx="1.5"/>
<rect x="793" y="448.7" width="1.4" height="24" fill="#ffe0c8"/>
<rect x="113.2" y="307.1" width="22.2" height="11.2" fill="#4c3390" rx="2.5"/>
<rect x="113.2" y="307.1" width="22.2" height="9" fill="#6a49b6" rx="2.5"/>
<rect x="114.7" y="307.7" width="19.2" height="1.8" fill="#8560cf" rx="1"/>
<rect x="125.5" y="323.6" width="9.9" height="12" fill="#4c3390" rx="2.5"/>
<rect x="125.5" y="323.6" width="9.9" height="9.8" fill="#6a49b6" rx="2.5"/>
<rect x="127" y="324.2" width="6.9" height="1.8" fill="#8560cf" rx="1"/>
<rect x="119.5" y="340.4" width="15.8" height="12.7" fill="#4c3390" rx="2.5"/>
<rect x="119.5" y="340.4" width="15.8" height="10.5" fill="#6a49b6" rx="2.5"/>
<rect x="121" y="341" width="12.8" height="1.8" fill="#8560cf" rx="1"/>
<rect x="123.8" y="358" width="11.6" height="21.5" fill="#4c3390" rx="2.5"/>
<rect x="123.8" y="358" width="11.6" height="19.3" fill="#6a49b6" rx="2.5"/>
<rect x="125.3" y="358.6" width="8.6" height="1.8" fill="#8560cf" rx="1"/>
<rect x="113.2" y="384.8" width="22.2" height="15.2" fill="#4c3390" rx="2.5"/>
<rect x="113.2" y="384.8" width="22.2" height="13" fill="#6a49b6" rx="2.5"/>
<rect x="114.7" y="385.4" width="19.2" height="1.8" fill="#8560cf" rx="1"/>
<rect x="113.2" y="384.6" width="22.2" height="15.4" fill="#4c3390" rx="2.5"/>
<rect x="113.2" y="384.6" width="22.2" height="13.2" fill="#6a49b6" rx="2.5"/>
<rect x="114.7" y="385.2" width="19.2" height="1.8" fill="#8560cf" rx="1"/>
<rect x="123.8" y="405.7" width="11.6" height="21.7" fill="#4c3390" rx="2.5"/>
<rect x="123.8" y="405.7" width="11.6" height="19.5" fill="#6a49b6" rx="2.5"/>
<rect x="125.3" y="406.3" width="8.6" height="1.8" fill="#8560cf" rx="1"/>
<rect x="119.5" y="431.7" width="15.8" height="12.7" fill="#4c3390" rx="2.5"/>
<rect x="119.5" y="431.7" width="15.8" height="10.5" fill="#6a49b6" rx="2.5"/>
<rect x="121" y="432.3" width="12.8" height="1.8" fill="#8560cf" rx="1"/>
<rect x="125.5" y="448.6" width="9.9" height="12.7" fill="#4c3390" rx="2.5"/>
<rect x="125.5" y="448.6" width="9.9" height="10.5" fill="#6a49b6" rx="2.5"/>
<rect x="127" y="449.2" width="6.9" height="1.8" fill="#8560cf" rx="1"/>
<rect x="113.2" y="465.5" width="22.2" height="12.7" fill="#4c3390" rx="2.5"/>
<rect x="113.2" y="465.5" width="22.2" height="10.5" fill="#6a49b6" rx="2.5"/>
<rect x="114.7" y="466.1" width="19.2" height="1.8" fill="#8560cf" rx="1"/>
<rect x="805.5" y="307.1" width="22.2" height="11.2" fill="#4c3390" rx="2.5"/>
<rect x="805.5" y="307.1" width="22.2" height="9" fill="#6a49b6" rx="2.5"/>
<rect x="807" y="307.7" width="19.2" height="1.8" fill="#8560cf" rx="1"/>
<rect x="805.5" y="323.6" width="9.9" height="12" fill="#4c3390" rx="2.5"/>
<rect x="805.5" y="323.6" width="9.9" height="9.8" fill="#6a49b6" rx="2.5"/>
<rect x="807" y="324.2" width="6.9" height="1.8" fill="#8560cf" rx="1"/>
<rect x="805.5" y="340.4" width="15.8" height="12.7" fill="#4c3390" rx="2.5"/>
<rect x="805.5" y="340.4" width="15.8" height="10.5" fill="#6a49b6" rx="2.5"/>
<rect x="807" y="341" width="12.8" height="1.8" fill="#8560cf" rx="1"/>
<rect x="805.5" y="358" width="11.6" height="21.5" fill="#4c3390" rx="2.5"/>
<rect x="805.5" y="358" width="11.6" height="19.3" fill="#6a49b6" rx="2.5"/>
<rect x="807" y="358.6" width="8.6" height="1.8" fill="#8560cf" rx="1"/>
<rect x="805.5" y="384.8" width="22.2" height="15.2" fill="#4c3390" rx="2.5"/>
<rect x="805.5" y="384.8" width="22.2" height="13" fill="#6a49b6" rx="2.5"/>
<rect x="807" y="385.4" width="19.2" height="1.8" fill="#8560cf" rx="1"/>
<rect x="805.5" y="384.6" width="22.2" height="15.4" fill="#4c3390" rx="2.5"/>
<rect x="805.5" y="384.6" width="22.2" height="13.2" fill="#6a49b6" rx="2.5"/>
<rect x="807" y="385.2" width="19.2" height="1.8" fill="#8560cf" rx="1"/>
<rect x="805.5" y="405.7" width="11.6" height="21.7" fill="#4c3390" rx="2.5"/>
<rect x="805.5" y="405.7" width="11.6" height="19.5" fill="#6a49b6" rx="2.5"/>
<rect x="807" y="406.3" width="8.6" height="1.8" fill="#8560cf" rx="1"/>
<rect x="805.5" y="431.7" width="15.8" height="12.7" fill="#4c3390" rx="2.5"/>
<rect x="805.5" y="431.7" width="15.8" height="10.5" fill="#6a49b6" rx="2.5"/>
<rect x="807" y="432.3" width="12.8" height="1.8" fill="#8560cf" rx="1"/>
<rect x="805.5" y="448.6" width="9.9" height="12.7" fill="#4c3390" rx="2.5"/>
<rect x="805.5" y="448.6" width="9.9" height="10.5" fill="#6a49b6" rx="2.5"/>
<rect x="807" y="449.2" width="6.9" height="1.8" fill="#8560cf" rx="1"/>
<rect x="805.5" y="465.5" width="22.2" height="12.7" fill="#4c3390" rx="2.5"/>
<rect x="805.5" y="465.5" width="22.2" height="10.5" fill="#6a49b6" rx="2.5"/>
<rect x="807" y="466.1" width="19.2" height="1.8" fill="#8560cf" rx="1"/>
<rect x="123.8" y="481" width="26.3" height="13.2" fill="#8e2b3f" rx="2.5"/>
<rect x="124.8" y="481.8" width="24.3" height="8.8" fill="#cb5e59" rx="2"/>
<rect x="126.8" y="481.8" width="20.3" height="1.4" fill="#f0a088"/>
<rect x="152.8" y="481" width="26.3" height="13.2" fill="#8e2b3f" rx="2.5"/>
<rect x="153.8" y="481.8" width="24.3" height="8.8" fill="#cb5e59" rx="2"/>
<rect x="155.8" y="481.8" width="20.3" height="1.4" fill="#f0a088"/>
<rect x="181.8" y="481" width="26.3" height="13.2" fill="#8e2b3f" rx="2.5"/>
<rect x="182.8" y="481.8" width="24.3" height="8.8" fill="#cb5e59" rx="2"/>
<rect x="184.8" y="481.8" width="20.3" height="1.4" fill="#f0a088"/>
<rect x="210.7" y="481" width="26.3" height="13.2" fill="#8e2b3f" rx="2.5"/>
<rect x="211.7" y="481.8" width="24.3" height="8.8" fill="#cb5e59" rx="2"/>
<rect x="213.7" y="481.8" width="20.3" height="1.4" fill="#f0a088"/>
<rect x="239.7" y="481" width="26.3" height="13.2" fill="#8e2b3f" rx="2.5"/>
<rect x="240.7" y="481.8" width="24.3" height="8.8" fill="#cb5e59" rx="2"/>
<rect x="242.7" y="481.8" width="20.3" height="1.4" fill="#f0a088"/>
<rect x="268.6" y="481" width="26.3" height="13.2" fill="#8e2b3f" rx="2.5"/>
<rect x="269.6" y="481.8" width="24.3" height="8.8" fill="#cb5e59" rx="2"/>
<rect x="271.6" y="481.8" width="20.3" height="1.4" fill="#f0a088"/>
<rect x="297.6" y="481" width="26.3" height="13.2" fill="#8e2b3f" rx="2.5"/>
<rect x="298.6" y="481.8" width="24.3" height="8.8" fill="#cb5e59" rx="2"/>
<rect x="300.6" y="481.8" width="20.3" height="1.4" fill="#f0a088"/>
<rect x="326.5" y="481" width="26.3" height="13.2" fill="#8e2b3f" rx="2.5"/>
<rect x="327.5" y="481.8" width="24.3" height="8.8" fill="#cb5e59" rx="2"/>
<rect x="329.5" y="481.8" width="20.3" height="1.4" fill="#f0a088"/>
<rect x="355.4" y="481" width="26.3" height="13.2" fill="#8e2b3f" rx="2.5"/>
<rect x="356.4" y="481.8" width="24.3" height="8.8" fill="#cb5e59" rx="2"/>
<rect x="358.4" y="481.8" width="20.3" height="1.4" fill="#f0a088"/>
<g transform="translate(397.6 492.8) rotate(18.4)">
<rect x="-13.5" y="-7" width="27" height="14" fill="#8e2b3f" rx="2"/>
<rect x="-12.5" y="-6.4" width="25" height="9.8" fill="#cb5e59" rx="2"/>
<rect x="-10.5" y="-6.4" width="21" height="1.4" fill="#ffe8d8"/>
</g>
<g transform="translate(426.5 502.5) rotate(18.4)">
<rect x="-13.5" y="-7" width="27" height="14" fill="#8e2b3f" rx="2"/>
<rect x="-12.5" y="-6.4" width="25" height="9.8" fill="#cb5e59" rx="2"/>
<rect x="-10.5" y="-6.4" width="21" height="1.4" fill="#ffe8d8"/>
</g>
<g transform="translate(455.5 512.1) rotate(18.4)">
<rect x="-13.5" y="-7" width="27" height="14" fill="#8e2b3f" rx="2"/>
<rect x="-12.5" y="-6.4" width="25" height="9.8" fill="#cb5e59" rx="2"/>
<rect x="-10.5" y="-6.4" width="21" height="1.4" fill="#ffe8d8"/>
</g>
<g transform="translate(484.4 521.8) rotate(18.4)">
<rect x="-13.5" y="-7" width="27" height="14" fill="#8e2b3f" rx="2"/>
<rect x="-12.5" y="-6.4" width="25" height="9.8" fill="#cb5e59" rx="2"/>
<rect x="-10.5" y="-6.4" width="21" height="1.4" fill="#ffe8d8"/>
</g>
<g transform="translate(513.4 531.4) rotate(18.4)">
<rect x="-13.5" y="-7" width="27" height="14" fill="#8e2b3f" rx="2"/>
<rect x="-12.5" y="-6.4" width="25" height="9.8" fill="#cb5e59" rx="2"/>
<rect x="-10.5" y="-6.4" width="21" height="1.4" fill="#ffe8d8"/>
</g>
<g transform="translate(542.3 541.1) rotate(18.4)">
<rect x="-13.5" y="-7" width="27" height="14" fill="#8e2b3f" rx="2"/>
<rect x="-12.5" y="-6.4" width="25" height="9.8" fill="#cb5e59" rx="2"/>
<rect x="-10.5" y="-6.4" width="21" height="1.4" fill="#ffe8d8"/>
</g>
<rect x="558.1" y="538.9" width="26.3" height="13.2" fill="#8e2b3f" rx="2.5"/>
<rect x="559.1" y="539.7" width="24.3" height="8.8" fill="#cb5e59" rx="2"/>
<rect x="561.1" y="539.7" width="20.3" height="1.4" fill="#f0a088"/>
<rect x="587" y="538.9" width="26.3" height="13.2" fill="#8e2b3f" rx="2.5"/>
<rect x="588" y="539.7" width="24.3" height="8.8" fill="#cb5e59" rx="2"/>
<rect x="590" y="539.7" width="20.3" height="1.4" fill="#f0a088"/>
<rect x="616" y="538.9" width="26.3" height="13.2" fill="#8e2b3f" rx="2.5"/>
<rect x="617" y="539.7" width="24.3" height="8.8" fill="#cb5e59" rx="2"/>
<rect x="619" y="539.7" width="20.3" height="1.4" fill="#f0a088"/>
<rect x="644.9" y="538.9" width="26.3" height="13.2" fill="#8e2b3f" rx="2.5"/>
<rect x="645.9" y="539.7" width="24.3" height="8.8" fill="#cb5e59" rx="2"/>
<rect x="647.9" y="539.7" width="20.3" height="1.4" fill="#f0a088"/>
<rect x="731.8" y="481" width="26.3" height="13.2" fill="#8e2b3f" rx="2.5"/>
<rect x="732.8" y="481.8" width="24.3" height="8.8" fill="#cb5e59" rx="2"/>
<rect x="734.8" y="481.8" width="20.3" height="1.4" fill="#f0a088"/>
<rect x="760.8" y="481" width="26.3" height="13.2" fill="#8e2b3f" rx="2.5"/>
<rect x="761.8" y="481.8" width="24.3" height="8.8" fill="#cb5e59" rx="2"/>
<rect x="763.8" y="481.8" width="20.3" height="1.4" fill="#f0a088"/>
<rect x="789.7" y="481" width="26.3" height="13.2" fill="#8e2b3f" rx="2.5"/>
<rect x="790.7" y="481.8" width="24.3" height="8.8" fill="#cb5e59" rx="2"/>
<rect x="792.7" y="481.8" width="20.3" height="1.4" fill="#f0a088"/>
<rect x="674.7" y="481.3" width="55.3" height="22.2" fill="#8e2b3f" rx="3"/>
<rect x="676.2" y="482.5" width="52.3" height="15.5" fill="#cb5e59" rx="2.5"/>
<rect x="675.1" y="505.6" width="12.7" height="30.2" fill="#8e2b3f" rx="2"/>
<rect x="679.1" y="506.6" width="7.9" height="28.2" fill="#cb5e59" rx="1.5"/>
<rect x="678.3" y="508.6" width="1.4" height="24.2" fill="#ffe0c8"/>
<rect x="689.5" y="505.6" width="16.2" height="21.5" fill="#4c3390" rx="2.5"/>
<rect x="689.5" y="505.6" width="16.2" height="19.3" fill="#6a49b6" rx="2.5"/>
<rect x="691" y="506.2" width="13.2" height="1.8" fill="#8560cf" rx="1"/>
<rect x="654.7" y="480.9" width="17.5" height="11" fill="#3c3a8c" rx="2.5"/>
<rect x="655.4" y="481.4" width="16.1" height="8.5" fill="#6466c4" rx="2.2"/>
<rect x="656.7" y="481.9" width="12.5" height="1.6" fill="#8084da" rx="1"/>
<rect x="645.2" y="492.5" width="18.6" height="11" fill="#3c3a8c" rx="2.5"/>
<rect x="645.9" y="493" width="17.2" height="8.5" fill="#6466c4" rx="2.2"/>
<rect x="647.2" y="493.5" width="13.6" height="1.6" fill="#8084da" rx="1"/>
<rect x="664.6" y="492.5" width="7.6" height="11" fill="#3c3a8c" rx="2.5"/>
<rect x="665.3" y="493" width="6.2" height="8.5" fill="#6466c4" rx="2.2"/>
<rect x="666.6" y="493.5" width="2.6" height="1.6" fill="#8084da" rx="1"/>
<rect x="635.7" y="504.1" width="18.4" height="10.6" fill="#3c3a8c" rx="2.5"/>
<rect x="636.4" y="504.6" width="17" height="8.1" fill="#6466c4" rx="2.2"/>
<rect x="637.7" y="505.1" width="13.4" height="1.6" fill="#8084da" rx="1"/>
<rect x="654.9" y="504.1" width="17.3" height="10.6" fill="#3c3a8c" rx="2.5"/>
<rect x="655.6" y="504.6" width="15.9" height="8.1" fill="#6466c4" rx="2.2"/>
<rect x="656.9" y="505.1" width="12.3" height="1.6" fill="#8084da" rx="1"/>
<rect x="625.7" y="515.3" width="18.6" height="10.3" fill="#3c3a8c" rx="2.5"/>
<rect x="626.4" y="515.8" width="17.2" height="7.8" fill="#6466c4" rx="2.2"/>
<rect x="627.7" y="516.3" width="13.6" height="1.6" fill="#8084da" rx="1"/>
<rect x="645.2" y="515.3" width="18.6" height="10.3" fill="#3c3a8c" rx="2.5"/>
<rect x="645.9" y="515.8" width="17.2" height="7.8" fill="#6466c4" rx="2.2"/>
<rect x="647.2" y="516.3" width="13.6" height="1.6" fill="#8084da" rx="1"/>
<rect x="664.6" y="515.3" width="7.6" height="10.3" fill="#3c3a8c" rx="2.5"/>
<rect x="665.3" y="515.8" width="6.2" height="7.8" fill="#6466c4" rx="2.2"/>
<rect x="666.6" y="516.3" width="2.6" height="1.6" fill="#8084da" rx="1"/>
<rect x="616.7" y="526.2" width="18.4" height="9.9" fill="#3c3a8c" rx="2.5"/>
<rect x="617.4" y="526.7" width="17" height="7.4" fill="#6466c4" rx="2.2"/>
<rect x="618.7" y="527.2" width="13.4" height="1.6" fill="#8084da" rx="1"/>
<rect x="635.9" y="526.2" width="18.1" height="9.9" fill="#3c3a8c" rx="2.5"/>
<rect x="636.6" y="526.7" width="16.7" height="7.4" fill="#6466c4" rx="2.2"/>
<rect x="637.9" y="527.2" width="13.1" height="1.6" fill="#8084da" rx="1"/>
<rect x="654.9" y="526.2" width="17.3" height="9.9" fill="#3c3a8c" rx="2.5"/>
<rect x="655.6" y="526.7" width="15.9" height="7.4" fill="#6466c4" rx="2.2"/>
<rect x="656.9" y="527.2" width="12.3" height="1.6" fill="#8084da" rx="1"/>
<rect x="210.9" y="441.6" width="26.3" height="14.5" fill="#8e2b3f" rx="2.5"/>
<rect x="211.9" y="442.4" width="24.3" height="10.1" fill="#cb5e59" rx="2"/>
<rect x="213.9" y="442.4" width="20.3" height="1.4" fill="#f0a088"/>
<rect x="239.9" y="441.6" width="26.3" height="14.5" fill="#8e2b3f" rx="2.5"/>
<rect x="240.9" y="442.4" width="24.3" height="10.1" fill="#cb5e59" rx="2"/>
<rect x="242.9" y="442.4" width="20.3" height="1.4" fill="#f0a088"/>
<rect x="269" y="441.6" width="26.3" height="14.5" fill="#8e2b3f" rx="2.5"/>
<rect x="270" y="442.4" width="24.3" height="10.1" fill="#cb5e59" rx="2"/>
<rect x="272" y="442.4" width="20.3" height="1.4" fill="#f0a088"/>
<rect x="298" y="441.6" width="26.3" height="14.5" fill="#8e2b3f" rx="2.5"/>
<rect x="299" y="442.4" width="24.3" height="10.1" fill="#cb5e59" rx="2"/>
<rect x="301" y="442.4" width="20.3" height="1.4" fill="#f0a088"/>
<rect x="385.5" y="406.4" width="26.3" height="14" fill="#8e2b3f" rx="2.5"/>
<rect x="386.5" y="407.2" width="24.3" height="9.6" fill="#cb5e59" rx="2"/>
<rect x="388.5" y="407.2" width="20.3" height="1.4" fill="#f0a088"/>
<rect x="414.5" y="406.4" width="26.3" height="14" fill="#8e2b3f" rx="2.5"/>
<rect x="415.5" y="407.2" width="24.3" height="9.6" fill="#cb5e59" rx="2"/>
<rect x="417.5" y="407.2" width="20.3" height="1.4" fill="#f0a088"/>
<rect x="500.6" y="348.5" width="26.3" height="14.2" fill="#8e2b3f" rx="2.5"/>
<rect x="501.6" y="349.3" width="24.3" height="9.8" fill="#cb5e59" rx="2"/>
<rect x="503.6" y="349.3" width="20.3" height="1.4" fill="#f0a088"/>
<rect x="529.6" y="348.5" width="26.3" height="14.2" fill="#8e2b3f" rx="2.5"/>
<rect x="530.6" y="349.3" width="24.3" height="9.8" fill="#cb5e59" rx="2"/>
<rect x="532.6" y="349.3" width="20.3" height="1.4" fill="#f0a088"/>
<rect x="558.6" y="348.5" width="26.3" height="14.2" fill="#8e2b3f" rx="2.5"/>
<rect x="559.6" y="349.3" width="24.3" height="9.8" fill="#cb5e59" rx="2"/>
<rect x="561.6" y="349.3" width="20.3" height="1.4" fill="#f0a088"/>
<rect x="587.7" y="348.5" width="26.3" height="14.2" fill="#8e2b3f" rx="2.5"/>
<rect x="588.7" y="349.3" width="24.3" height="9.8" fill="#cb5e59" rx="2"/>
<rect x="590.7" y="349.3" width="20.3" height="1.4" fill="#f0a088"/>
<polygon points="246.2,456 289.4,456 301,468.6 322.1,478.8 213.5,478.8 235.6,468.6" fill="#1d1a3c"/>
<rect x="216.6" y="457" width="12.7" height="10.6" fill="#4c3390" rx="2.5"/>
<rect x="216.6" y="457" width="12.7" height="8.4" fill="#6a49b6" rx="2.5"/>
<rect x="218.1" y="457.6" width="9.7" height="1.8" fill="#8560cf" rx="1"/>
<rect x="231" y="457" width="14.8" height="10.6" fill="#4c3390" rx="2.5"/>
<rect x="231" y="457" width="14.8" height="8.4" fill="#6a49b6" rx="2.5"/>
<rect x="232.5" y="457.6" width="11.8" height="1.8" fill="#8560cf" rx="1"/>
<rect x="216.6" y="468.6" width="12.7" height="9.5" fill="#4c3390" rx="2.5"/>
<rect x="216.6" y="468.6" width="12.7" height="7.3" fill="#6a49b6" rx="2.5"/>
<rect x="218.1" y="469.2" width="9.7" height="1.8" fill="#8560cf" rx="1"/>
<rect x="289.4" y="457" width="14.8" height="10.6" fill="#4c3390" rx="2.5"/>
<rect x="289.4" y="457" width="14.8" height="8.4" fill="#6a49b6" rx="2.5"/>
<rect x="290.9" y="457.6" width="11.8" height="1.8" fill="#8560cf" rx="1"/>
<rect x="305.9" y="457" width="12.7" height="10.6" fill="#4c3390" rx="2.5"/>
<rect x="305.9" y="457" width="12.7" height="8.4" fill="#6a49b6" rx="2.5"/>
<rect x="307.4" y="457.6" width="9.7" height="1.8" fill="#8560cf" rx="1"/>
<rect x="305.9" y="468.6" width="12.7" height="9.5" fill="#4c3390" rx="2.5"/>
<rect x="305.9" y="468.6" width="12.7" height="7.3" fill="#6a49b6" rx="2.5"/>
<rect x="307.4" y="469.2" width="9.7" height="1.8" fill="#8560cf" rx="1"/>
<rect x="258.4" y="457" width="18" height="7.5" fill="#912a3e" rx="3.4"/>
<rect x="234.1" y="470.7" width="18" height="7.5" fill="#912a3e" rx="3.4"/>
<rect x="283.1" y="470.7" width="18" height="7.5" fill="#912a3e" rx="3.4"/>
<rect x="398.3" y="250.3" width="22.4" height="8.7" fill="#23255c" rx="3"/>
<rect x="399.2" y="251.2" width="20.7" height="6.3" fill="#7176cc" rx="3"/>
<rect x="404" y="252.2" width="11" height="4.2" fill="#25306e" rx="2"/>
<rect x="406.6" y="252.9" width="6.3" height="3" fill="#4aa0e6" rx="1"/>
<rect x="406.6" y="258.6" width="6.3" height="28.1" fill="#222a60"/>
<rect x="408.7" y="259.2" width="2.1" height="27" fill="#3f8fe0"/>
<rect x="406.1" y="265.5" width="7.2" height="2.5" fill="#222a60"/>
<rect x="407.2" y="266.2" width="1.3" height="1.3" fill="#5aa8ee"/>
<rect x="411" y="266.2" width="1.3" height="1.3" fill="#5aa8ee"/>
<rect x="406.1" y="275" width="7.2" height="2.5" fill="#222a60"/>
<rect x="407.2" y="275.6" width="1.3" height="1.3" fill="#5aa8ee"/>
<rect x="411" y="275.6" width="1.3" height="1.3" fill="#5aa8ee"/>
<rect x="406.1" y="284.5" width="7.2" height="2.5" fill="#222a60"/>
<rect x="407.2" y="285.1" width="1.3" height="1.3" fill="#5aa8ee"/>
<rect x="411" y="285.1" width="1.3" height="1.3" fill="#5aa8ee"/>
<rect x="406.1" y="285.6" width="7.2" height="6.3" fill="#6a6fc8" rx="2"/>
<rect x="403.4" y="291.3" width="12.7" height="6.3" fill="#7378cf" rx="3"/>
<rect x="404.4" y="295.5" width="10.6" height="2.1" fill="#4c4aa0" rx="2"/>
<rect x="433.1" y="250.3" width="22.4" height="8.7" fill="#23255c" rx="3"/>
<rect x="434" y="251.2" width="20.7" height="6.3" fill="#7176cc" rx="3"/>
<rect x="438.8" y="252.2" width="11" height="4.2" fill="#25306e" rx="2"/>
<rect x="441.4" y="252.9" width="6.3" height="3" fill="#4aa0e6" rx="1"/>
<rect x="441.4" y="258.6" width="6.3" height="28.1" fill="#222a60"/>
<rect x="443.5" y="259.2" width="2.1" height="27" fill="#3f8fe0"/>
<rect x="441" y="265.5" width="7.2" height="2.5" fill="#222a60"/>
<rect x="442" y="266.2" width="1.3" height="1.3" fill="#5aa8ee"/>
<rect x="445.8" y="266.2" width="1.3" height="1.3" fill="#5aa8ee"/>
<rect x="441" y="275" width="7.2" height="2.5" fill="#222a60"/>
<rect x="442" y="275.6" width="1.3" height="1.3" fill="#5aa8ee"/>
<rect x="445.8" y="275.6" width="1.3" height="1.3" fill="#5aa8ee"/>
<rect x="441" y="284.5" width="7.2" height="2.5" fill="#222a60"/>
<rect x="442" y="285.1" width="1.3" height="1.3" fill="#5aa8ee"/>
<rect x="445.8" y="285.1" width="1.3" height="1.3" fill="#5aa8ee"/>
<rect x="441" y="285.6" width="7.2" height="6.3" fill="#6a6fc8" rx="2"/>
<rect x="438.2" y="291.3" width="12.7" height="6.3" fill="#7378cf" rx="3"/>
<rect x="439.3" y="295.5" width="10.6" height="2.1" fill="#4c4aa0" rx="2"/>
<path d="M351.7 358.4L351.7 322.5 359.1 314.1 363.7 306.7 368.4 314.1 375.5 322.5 375.5 358.4Z" fill="#211c40"/>
<path d="M355.3 357.3L355.3 329.9 362.2 320.4 362.2 357.3Z" fill="#36b3dc"/>
<path d="M365 357.3L365 320.4 371.7 329.9 371.7 357.3Z" fill="#36b3dc"/>
<path d="M355.3 342.5L355.3 329.9 359.1 324.6 359.1 342.5Z" fill="#2a86c8"/>
<path d="M368.6 348.9L368.6 325.7 371.7 329.9 371.7 348.9Z" fill="#2a86c8"/>
<rect x="354.4" y="349.9" width="18.1" height="1.7" fill="#211c40"/>
<rect x="345.4" y="359.4" width="35.5" height="5.3" fill="#4a86d8" rx="2"/>
<rect x="345.4" y="362.6" width="35.5" height="5.3" fill="#2f3f8c" rx="2"/>
<rect x="349.6" y="366.8" width="6.3" height="3.2" fill="#2f3f8c"/>
<rect x="370.7" y="366.8" width="6.3" height="3.2" fill="#2f3f8c"/>
<path d="M666.3 385.2L666.3 349.3 673.7 340.9 678.3 333.5 682.9 340.9 690.1 349.3 690.1 385.2Z" fill="#211c40"/>
<path d="M669.9 384.1L669.9 356.7 676.8 347.2 676.8 384.1Z" fill="#36b3dc"/>
<path d="M679.6 384.1L679.6 347.2 686.3 356.7 686.3 384.1Z" fill="#36b3dc"/>
<path d="M669.9 369.3L669.9 356.7 673.7 351.4 673.7 369.3Z" fill="#2a86c8"/>
<path d="M683.1 375.7L683.1 352.5 686.3 356.7 686.3 375.7Z" fill="#2a86c8"/>
<rect x="669" y="376.7" width="18.1" height="1.7" fill="#211c40"/>
<rect x="659.9" y="386.2" width="35.5" height="5.3" fill="#4a86d8" rx="2"/>
<rect x="659.9" y="389.4" width="35.5" height="5.3" fill="#2f3f8c" rx="2"/>
<rect x="664.2" y="393.6" width="6.3" height="3.2" fill="#2f3f8c"/>
<rect x="685.3" y="393.6" width="6.3" height="3.2" fill="#2f3f8c"/>
<path d="M223 354.2Q229.3 363.7 228.7 370Q228.2 376.3 221.5 376.3Q213.5 375.3 214.5 367.9Q216.6 361.5 223 354.2Z" fill="#f39a2d"/>
<circle cx="221.5" cy="370.6" r="4.6" fill="#ffd866"/>
<rect x="212.4" y="375.3" width="17.9" height="2.5" fill="#ffc36b" rx="2"/>
<rect x="205" y="377.8" width="31.7" height="9.7" fill="#23245e" rx="4"/>
<rect x="205.6" y="378.4" width="30.4" height="8.4" fill="#6466be" rx="4"/>
<rect x="212.4" y="379.9" width="16.9" height="4.2" fill="#34348a" rx="2"/>
<rect x="217.7" y="385.8" width="6.8" height="5.3" fill="#a04a4a" rx="3"/>
<path d="M319 354.2Q325.3 363.7 324.7 370Q324.3 376.3 317.5 376.3Q309.5 375.3 310.5 367.9Q312.6 361.5 319 354.2Z" fill="#f39a2d"/>
<circle cx="317.5" cy="370.6" r="4.6" fill="#ffd866"/>
<rect x="308.4" y="375.3" width="17.9" height="2.5" fill="#ffc36b" rx="2"/>
<rect x="301" y="377.8" width="31.7" height="9.7" fill="#23245e" rx="4"/>
<rect x="301.7" y="378.4" width="30.4" height="8.4" fill="#6466be" rx="4"/>
<rect x="308.4" y="379.9" width="16.9" height="4.2" fill="#34348a" rx="2"/>
<rect x="313.7" y="385.8" width="6.8" height="5.3" fill="#a04a4a" rx="3"/>
<path d="M246.8 439.3V401.3A21.5 21.5 0 0 1 289.8 401.3V439.3Z" fill="#33203f"/>
<path d="M243.6 439.3V401.3A24.7 24.7 0 0 1 293 401.3V439.3" stroke="#1b275e" stroke-width="8.4" fill="none"/>
<path d="M243.6 439.3V401.3A24.7 24.7 0 0 1 293 401.3V439.3" stroke="#35589f" stroke-width="5.6" stroke-dasharray="5.6 1.5" fill="none"/>
<path d="M243.6 439.3V401.3A24.7 24.7 0 0 1 293 401.3V439.3" stroke="#4f8ad8" stroke-width="1.5" stroke-dasharray="3 4.1" stroke-dashoffset="-1.2" fill="none"/>
<rect x="251.4" y="389" width="7.1" height="12" fill="#a3494c" rx="1.5"/>
<rect x="251.4" y="411.5" width="7.1" height="11" fill="#a3494c" rx="1.5"/>
<rect x="251.4" y="433" width="7.1" height="6" fill="#a3494c" rx="1.5"/>
<rect x="261.3" y="384" width="6.3" height="17" fill="#a3494c" rx="1.5"/>
<rect x="261.3" y="411.5" width="6.3" height="11" fill="#a3494c" rx="1.5"/>
<rect x="261.3" y="433" width="6.3" height="6" fill="#a3494c" rx="1.5"/>
<rect x="269.7" y="384" width="7.1" height="17" fill="#a3494c" rx="1.5"/>
<rect x="269.7" y="411.5" width="7.1" height="11" fill="#a3494c" rx="1.5"/>
<rect x="269.7" y="433" width="7.1" height="6" fill="#a3494c" rx="1.5"/>
<rect x="278.9" y="389" width="7" height="12" fill="#a3494c" rx="1.5"/>
<rect x="278.9" y="411.5" width="7" height="11" fill="#a3494c" rx="1.5"/>
<rect x="278.9" y="433" width="7" height="6" fill="#a3494c" rx="1.5"/>
<rect x="250" y="402" width="37.3" height="8.4" fill="#7d7dcf" rx="1"/>
<rect x="250" y="423.8" width="37.3" height="8.5" fill="#7d7dcf" rx="1"/>
<rect x="274" y="403.5" width="9" height="5.5" fill="#c4c4ee"/>
<rect x="274" y="425.3" width="9" height="5.5" fill="#c4c4ee"/>
<rect x="250" y="409" width="37.3" height="1.6" fill="#4c4a9c"/>
<rect x="250" y="430.8" width="37.3" height="1.6" fill="#4c4a9c"/>
<path d="M161.1 453.9L171.7 453.9 171.7 456.4 169.6 458.1Q176.9 463.4 176.5 469.7Q175.9 478.1 166.4 478.1Q156.5 478.1 155.8 469.7Q155.8 463.4 163.2 458.1L161.1 456.4Z" fill="#b97a45"/>
<rect x="157.5" y="465.5" width="17.7" height="5.3" fill="#e6b866"/>
<rect x="163.2" y="464" width="4.2" height="8.9" fill="#f4d58a"/>
<rect x="160.5" y="453.9" width="11.8" height="1.7" fill="#e6b866"/>
<path d="M186 453.9L196.6 453.9 196.6 456.4 194.5 458.1Q201.8 463.4 201.4 469.7Q200.8 478.1 191.3 478.1Q181.4 478.1 180.7 469.7Q180.7 463.4 188.1 458.1L186 456.4Z" fill="#b97a45"/>
<rect x="182.4" y="465.5" width="17.7" height="5.3" fill="#e6b866"/>
<rect x="188.1" y="464" width="4.2" height="8.9" fill="#f4d58a"/>
<rect x="185.4" y="453.9" width="11.8" height="1.7" fill="#e6b866"/>
<path d="M308.4 429.6Q309.5 421.2 320 421.2Q330.6 421.2 332.3 429.6Z" fill="#e3a248"/>
<rect x="304.8" y="429" width="31" height="4.2" fill="#7cae3a" rx="4"/>
<rect x="307.4" y="432.8" width="26.4" height="2.5" fill="#d8202a"/>
<rect x="308.4" y="434.4" width="24.3" height="4.2" fill="#5a2418" rx="3"/>
<rect x="309.5" y="438" width="22.2" height="4.4" fill="#e3a248" rx="4"/>
<rect x="307.4" y="435.3" width="12.7" height="1.7" fill="#ffd23a"/>
<path d="M341.1 478.1L341.1 469.7 346.4 469.7Q348.5 459.1 358 458.1Q367.5 459.1 369.6 469.7L374.9 469.7 374.9 478.1Z" fill="#2d3f8f"/>
<path d="M349.2 478.1L349.2 470.7Q350.6 462.7 358 461.9Q365.4 462.7 366.9 470.7L366.9 478.1Z" fill="#1d1b40"/>
<rect x="356.3" y="462.7" width="3.4" height="15.4" fill="#3a57b4"/>
<rect x="401.9" y="388.4" width="27.4" height="17.9" fill="#2a2a6e" rx="3"/>
<rect x="404.4" y="390.1" width="22.4" height="7.2" fill="#c85a3c" rx="2"/>
<rect x="404.4" y="391" width="22.4" height="2.5" fill="#f09a5a"/>
<rect x="405.5" y="398.6" width="20" height="6.8" fill="#5a3a9a"/>
<rect x="412.9" y="396.5" width="5.5" height="7.2" fill="#d8d8f0"/>
<rect x="401.9" y="388.4" width="3" height="17.9" fill="#5a62c0"/>
<rect x="426.4" y="388.4" width="3" height="17.9" fill="#5a62c0"/>
<path d="M501.7 316.6L506.3 312.4 522.8 329.9 518.1 334.1Z" fill="#9c4038"/>
<circle cx="505" cy="315.7" r="3.2" fill="#9a9ad0"/>
<path d="M516.9 339Q518.1 327.8 530.8 327.1Q543.4 327.8 544.3 339Z" fill="#5a5cb8"/>
<path d="M521.7 339Q522.8 331.4 530.8 330.9Q538.8 331.4 539.6 339Z" fill="#22245a"/>
<path d="M525.3 337.3Q526.1 333.5 531.2 333.1Q536.3 333.5 537.1 337.3Z" fill="#2f7fd6"/>
<rect x="513.9" y="337.7" width="33.1" height="9.7" fill="#473c9c" rx="3"/>
<rect x="514.7" y="338.5" width="31.4" height="2.5" fill="#8a86d8"/>
<rect x="562.9" y="327.1" width="24.3" height="20.3" fill="#8a2f36" rx="3"/>
<rect x="565" y="329.3" width="20" height="16" fill="#b04c46" rx="2"/>
<rect x="569.2" y="332" width="11.6" height="11.2" fill="#8a2f36"/>
<rect x="562.9" y="327.1" width="24.3" height="3" fill="#e07a5a" rx="2"/>
<rect x="586.1" y="325.7" width="27.4" height="21.7" fill="#8a2f36" rx="8"/>
<rect x="588.6" y="327.8" width="4.6" height="16.9" fill="#a8484a" rx="3"/>
<rect x="594.9" y="327.8" width="4.6" height="16.9" fill="#a8484a" rx="3"/>
<rect x="601.3" y="327.8" width="4.6" height="16.9" fill="#a8484a" rx="3"/>
<rect x="607.6" y="327.8" width="4.6" height="16.9" fill="#a8484a" rx="3"/>
<rect x="587.1" y="341.5" width="26" height="2.1" fill="#8a86d8"/>
<circle cx="607.2" cy="288.7" r="8.7" fill="#1683e8"/>
<path d="M605.1 301L609.7 301 611 316.2 603.8 316.2Z" fill="#6e6e6e"/>
<path d="M619 316.2Q619.8 309.8 625.1 309.8Q630.4 309.8 631.2 316.2Z" fill="#1683e8"/>
<rect x="595.8" y="319.3" width="40.9" height="9.5" fill="#6c6c6c" rx="4"/>
<rect x="571.3" y="371" width="26.4" height="165.6" fill="#2b306c"/>
<rect x="571.3" y="371" width="3.2" height="165.6" fill="#c85a4c"/>
<rect x="594.5" y="371" width="3.2" height="165.6" fill="#c85a4c"/>
<rect x="574.5" y="371" width="1.2" height="165.6" fill="#7a2a3a"/>
<rect x="593.3" y="371" width="1.2" height="165.6" fill="#7a2a3a"/>
<rect x="575.7" y="375" width="17.6" height="2.6" fill="#b8464c"/>
<rect x="575.7" y="379.3" width="17.6" height="2.6" fill="#3a4fa6"/>
<rect x="575.7" y="383.5" width="17.6" height="2.6" fill="#b8464c"/>
<rect x="575.7" y="387.8" width="17.6" height="2.6" fill="#3a4fa6"/>
<rect x="575.7" y="392" width="17.6" height="2.6" fill="#b8464c"/>
<rect x="575.7" y="396.3" width="17.6" height="2.6" fill="#3a4fa6"/>
<rect x="575.7" y="400.5" width="17.6" height="2.6" fill="#b8464c"/>
<rect x="575.7" y="404.8" width="17.6" height="2.6" fill="#3a4fa6"/>
<rect x="575.7" y="409" width="17.6" height="2.6" fill="#b8464c"/>
<rect x="575.7" y="413.3" width="17.6" height="2.6" fill="#3a4fa6"/>
<rect x="575.7" y="417.5" width="17.6" height="2.6" fill="#b8464c"/>
<rect x="575.7" y="421.8" width="17.6" height="2.6" fill="#3a4fa6"/>
<rect x="575.7" y="426" width="17.6" height="2.6" fill="#b8464c"/>
<rect x="575.7" y="430.3" width="17.6" height="2.6" fill="#3a4fa6"/>
<rect x="575.7" y="434.5" width="17.6" height="2.6" fill="#b8464c"/>
<rect x="575.7" y="438.8" width="17.6" height="2.6" fill="#3a4fa6"/>
<rect x="575.7" y="443" width="17.6" height="2.6" fill="#b8464c"/>
<rect x="575.7" y="447.3" width="17.6" height="2.6" fill="#3a4fa6"/>
<rect x="575.7" y="451.5" width="17.6" height="2.6" fill="#b8464c"/>
<rect x="575.7" y="455.8" width="17.6" height="2.6" fill="#3a4fa6"/>
<rect x="575.7" y="460" width="17.6" height="2.6" fill="#b8464c"/>
<rect x="575.7" y="464.3" width="17.6" height="2.6" fill="#3a4fa6"/>
<rect x="575.7" y="468.5" width="17.6" height="2.6" fill="#b8464c"/>
<rect x="575.7" y="472.8" width="17.6" height="2.6" fill="#3a4fa6"/>
<rect x="575.7" y="477" width="17.6" height="2.6" fill="#b8464c"/>
<rect x="575.7" y="481.3" width="17.6" height="2.6" fill="#3a4fa6"/>
<rect x="575.7" y="485.5" width="17.6" height="2.6" fill="#b8464c"/>
<rect x="575.7" y="489.8" width="17.6" height="2.6" fill="#3a4fa6"/>
<rect x="575.7" y="494" width="17.6" height="2.6" fill="#b8464c"/>
<rect x="575.7" y="498.3" width="17.6" height="2.6" fill="#3a4fa6"/>
<rect x="575.7" y="502.5" width="17.6" height="2.6" fill="#b8464c"/>
<rect x="575.7" y="506.8" width="17.6" height="2.6" fill="#3a4fa6"/>
<rect x="575.7" y="511" width="17.6" height="2.6" fill="#b8464c"/>
<rect x="575.7" y="515.3" width="17.6" height="2.6" fill="#3a4fa6"/>
<rect x="575.7" y="519.5" width="17.6" height="2.6" fill="#b8464c"/>
<rect x="575.7" y="523.8" width="17.6" height="2.6" fill="#3a4fa6"/>
<rect x="575.7" y="528" width="17.6" height="2.6" fill="#b8464c"/>
<rect x="575.7" y="532.3" width="17.6" height="2.6" fill="#3a4fa6"/>
<rect x="569.8" y="370" width="5.7" height="4.2" fill="#3f5cc0" rx="2"/>
<rect x="593.5" y="370" width="5.7" height="4.2" fill="#3f5cc0" rx="2"/>
<path d="M711.6 353.7Q733.8 349.9 754.9 353.7Q754.9 383.7 733.4 395.3Q712.7 383.7 711.6 353.7Z" fill="#e8923a"/>
<path d="M714.8 356.7Q733.8 353.7 751.7 356.7Q751.1 381.6 733.4 391.7Q715.9 381.6 714.8 356.7Z" fill="#2a3f8f"/>
<path d="M719 359.4Q733.8 357.3 748.1 359.4Q746.9 379.5 733.4 387.9Q720.7 379.5 719 359.4Z" fill="#3a62c0"/>
<rect x="727" y="358.8" width="6.8" height="28.7" fill="#6fa8ee"/>
<path d="M713.1 479.2V440.7A22.3 22.3 0 0 1 757.7 440.7V479.2Z" fill="#2a2650"/>
<path d="M709.9 479.2V440.7A25.5 25.5 0 0 1 760.9 440.7V479.2" stroke="#1b275e" stroke-width="8.4" fill="none"/>
<path d="M709.9 479.2V440.7A25.5 25.5 0 0 1 760.9 440.7V479.2" stroke="#35589f" stroke-width="5.6" stroke-dasharray="5.6 1.5" fill="none"/>
<path d="M709.9 479.2V440.7A25.5 25.5 0 0 1 760.9 440.7V479.2" stroke="#4f8ad8" stroke-width="1.5" stroke-dasharray="3 4.1" stroke-dashoffset="-1.2" fill="none"/>
<rect x="718" y="429" width="9.5" height="49.5" fill="#8e3a48"/>
<rect x="719" y="431" width="4.5" height="47.5" fill="#b8525a"/>
<rect x="369" y="445" width="12.2" height="22.8" fill="#d8141c" rx="4"/>
<rect x="375.3" y="449.2" width="2.5" height="15.8" fill="#f46a6a"/>
<rect x="370.3" y="444.2" width="9.7" height="2.1" fill="#c8c8c8" rx="2"/>
<rect x="710.2" y="445" width="12.2" height="22.8" fill="#d8141c" rx="4"/>
<rect x="716.5" y="449.2" width="2.5" height="15.8" fill="#f46a6a"/>
<rect x="711.4" y="444.2" width="9.7" height="2.1" fill="#c8c8c8" rx="2"/>
<rect x="769.3" y="445" width="12.2" height="22.8" fill="#d8141c" rx="4"/>
<rect x="775.6" y="449.2" width="2.5" height="15.8" fill="#f46a6a"/>
<rect x="770.5" y="444.2" width="9.7" height="2.1" fill="#c8c8c8" rx="2"/>
<path d="M666.3 443.3Q665.2 425.4 673 425.4Q680 425.4 678.9 443.3L675.8 446.5 669.4 446.5Z" fill="#e8e0d8"/>
<path d="M669.4 441.2L677.9 441.2 681 454.9 663.1 454.9Z" fill="#1c1a22"/>
<rect x="668.4" y="454.9" width="11" height="3.6" fill="#d8d8e0"/>
<rect x="669" y="458.5" width="3.2" height="14.4" fill="#7a4a3a"/>
<rect x="675.1" y="458.5" width="3.4" height="14.4" fill="#7a4a3a"/>
<rect x="683.1" y="440.1" width="2.5" height="33.8" fill="#b8c0d8"/>
<circle cx="684.4" cy="438.7" r="2.3" fill="#5ab8e8"/>
<linearGradient id="wg" gradientUnits="userSpaceOnUse" x1="819.8" y1="228" x2="859" y2="161"><stop offset="0" stop-color="#262628" stop-opacity="0"/><stop offset=".1" stop-color="#262628" stop-opacity=".4"/><stop offset=".22" stop-color="#333335" stop-opacity=".7"/><stop offset=".35" stop-color="#6c6c6c" stop-opacity=".92"/><stop offset=".48" stop-color="#989898"/><stop offset=".6" stop-color="#c4c4c4"/><stop offset=".72" stop-color="#dadada"/><stop offset="1" stop-color="#e6e6e6"/></linearGradient><rect x="660" y="161" width="199" height="130" fill="url(#wg)" filter="url(#bl2)"/>
<path d="M35.7 161V685M93.6 161V685M151.5 161V685M209.4 161V685M267.3 161V685M325.2 161V685M383.1 161V685M441.0 161V685M498.9 161V685M556.8 161V685M614.7 161V685M672.6 161V685M730.5 161V685M788.4 161V685M846.3 161V685M0 189.5H859M0 247.4H859M0 305.3H859M0 363.2H859M0 421.1H859M0 479.0H859M0 536.9H859M0 594.8H859M0 652.7H859" stroke="#fff" stroke-opacity=".2" stroke-width="1" fill="none"/>
<path d="M615.5 161V305.500H859" stroke="#d8d8d8" stroke-opacity=".55" stroke-width="1.1" fill="none"/><path d="M353 664.500H859" stroke="#d4d4d4" stroke-opacity=".85" stroke-width="1" fill="none"/>
</svg>
<div class="a" style="left:3px;top:4px;width:54px;height:181px;background:#101010;border-radius:5px"></div>
<div class="a" style="left:20px;top:12px;width:20px;height:1px;background:#6a6a6a"></div><div class="a" style="left:20px;top:15px;width:20px;height:1px;background:#6a6a6a"></div>
<div class="btn" style="left:7px;top:26px;width:46px;height:25px;border-radius:4px 4px 0 0"></div>
<div class="btn on" style="left:7px;top:52px;width:46px;height:25px;border-radius:0"></div>
<div class="btn" style="left:7px;top:78px;width:46px;height:25px;border-radius:0"></div>
<div class="btn" style="left:7px;top:104px;width:46px;height:25px;border-radius:0"></div>
<div class="btn" style="left:7px;top:130px;width:46px;height:25px;border-radius:0"></div>
<div class="btn" style="left:7px;top:156px;width:46px;height:25px;border-radius:0 0 4px 4px"></div>
<svg style="left:7px;top:26px" width="46" height="156" viewBox="0 0 46 156">
<g stroke="#dcdcdc" stroke-width="2.3" stroke-linecap="round" fill="none"><path d="M18.3 8 V14 M21.3 5.8 V14 M24.5 5.5 V14 M27.6 7.3 V14.5"/><path d="M14.5 12.5 L17.5 17"/></g><path d="M17 13 H28.8 V16 Q28.8 21.5 25.5 22 H20 Q17 20 17 16Z" fill="#dcdcdc"/>
<g stroke="#f4f4f4" stroke-width="1.4" fill="none"><path d="M23 29.5 V36 M23 42 V48.5 M13.5 39 H20 M26 39 H32.5"/><path d="M20.3 32.2 L23 29.5 L25.7 32.2 M20.3 45.8 L23 48.5 L25.7 45.8 M16.2 36.3 L13.5 39 L16.2 41.7 M29.8 36.3 L32.5 39 L29.8 41.7"/></g>
<g stroke="#c8c8c8" stroke-width="1.4" fill="none"><path d="M22 57 A8.5 8.5 0 0 0 17 72 M24 73.5 A8.5 8.5 0 0 0 29 58.5"/><path d="M17.5 68 L16.8 72.2 L21 72.5 M28.5 62.5 L29.2 58.3 L25 58"/>
<rect x="14.5" y="82.5" width="17" height="17" rx="1.5"/><path d="M14.5 94.5 H19.5 V99.5 M22 92 L28.5 85.5 M24 85.5 H28.5 V90"/>
<path d="M16 110 H30 M16 126 H30 M15 111 V125 M31 111 V125"/></g>
<g fill="#c8c8c8"><rect x="13" y="108" width="4" height="4"/><rect x="29" y="108" width="4" height="4"/><rect x="13" y="124" width="4" height="4"/><rect x="29" y="124" width="4" height="4"/></g>
<g stroke="#c8c8c8" stroke-width="1.3" fill="none"><circle cx="23" cy="143" r="8"/><path d="M23 137.5 V148.5 M17.5 143 H28.5"/><path d="M21 139.5 L23 137.5 L25 139.5 M21 146.5 L23 148.5 L25 146.5 M19.5 141 L17.5 143 L19.5 145 M26.5 141 L28.5 143 L26.5 145"/></g>
<path d="M33 133 V137 L29 133Z M13 153 V149 L17 153Z" fill="#c8c8c8"/>
</svg>
<div class="a" style="left:3px;top:488px;width:351px;height:32px;background:#101010;border-radius:5px"></div>
<div class="a" style="left:10px;top:494px;width:1px;height:20px;background:#5a5a5a"></div><div class="a" style="left:13px;top:494px;width:1px;height:20px;background:#5a5a5a"></div>
<div class="btn on" style="left:23px;top:492px;width:40px;height:25px;border-radius:4px 0 0 4px"></div>
<div class="btn on" style="left:64px;top:492px;width:40px;height:25px;border-radius:0"></div>
<div class="btn on" style="left:105px;top:492px;width:40px;height:25px;border-radius:0"></div>
<div class="btn on" style="left:146px;top:492px;width:40px;height:25px;border-radius:0"></div>
<div class="btn on" style="left:187px;top:492px;width:40px;height:25px;border-radius:0"></div>
<div class="btn" style="left:228px;top:492px;width:40px;height:25px;border-radius:0"></div>
<div class="btn" style="left:269px;top:492px;width:40px;height:25px;border-radius:0"></div>
<div class="btn" style="left:310px;top:492px;width:40px;height:25px;border-radius:0 4px 4px 0"></div>
<svg style="left:23px;top:492px" width="328" height="25" viewBox="0 0 328 25">
<g stroke="#e8e8e8" stroke-width="1.4" fill="none"><path d="M14 5.5 H26 M14 19.5 H26 M13 7 V18 M27 7 V18" stroke-dasharray="3.5 2"/></g><g fill="#e8e8e8"><rect x="11" y="3.5" width="4" height="4"/><rect x="25" y="3.5" width="4" height="4"/><rect x="11" y="17.5" width="4" height="4"/><rect x="25" y="17.5" width="4" height="4"/></g>
<g stroke="#e8e8e8" stroke-width="1.3" fill="none"><rect x="54.5" y="4.5" width="14" height="4.5"/><path d="M54 13.5 H69 M54 19 H69"/></g><g fill="#e8e8e8"><rect x="54.5" y="4.5" width="5" height="4.5"/><circle cx="59" cy="13.5" r="1.9"/><circle cx="64.5" cy="19" r="1.9"/></g>
<g stroke="#e8e8e8" stroke-width="1.2" fill="none"><path d="M97 4 V12 M101 4 V10 M94 7.5 H104 M94 11 H100 M93 21 L110 4 M102 16 V21 M105 12 V21 M108 9 V21 M111 13 V21 M99 18.5 H111 M102 15.5 H111"/></g>
<circle cx="143" cy="12.5" r="8.8" fill="#f0f0f0"/><circle cx="141.2" cy="10.7" r="6.4" fill="#46607c"/><circle cx="143" cy="12.5" r="8.3" stroke="#f0f0f0" stroke-width="1.2" fill="none"/>
<circle cx="178" cy="6" r="3" fill="#e8e8e8"/><path d="M175 15.5 L184 10.5 L193 15.5 L184 20.500Z M179.5 13 L188.5 18 M188.5 13 L179.5 18" stroke="#e8e8e8" stroke-width="1.3" fill="none"/>
<circle cx="223" cy="10.5" r="5" stroke="#dcdcdc" stroke-width="1.5" fill="none"/><path d="M226.5 14 L231.5 19" stroke="#dcdcdc" stroke-width="2"/>
<rect x="257" y="3.5" width="11" height="9.5" rx="1.5" fill="#dcdcdc"/><path d="M268 7 L272 4.5 V12 L268 9.500Z" fill="#dcdcdc"/><path d="M261 16.5 Q267 11 273 16.5 Q267 22 261 16.500Z" fill="#dcdcdc" stroke="#585858" stroke-width="1"/><circle cx="267" cy="16.5" r="1.7" fill="#585858"/>
<g stroke="#a98bf0" stroke-width="1.5" fill="none"><path d="M297 8 H300 Q303 8 305 12.5 Q307 17 310 17 H314 M297 17 H300 Q303 17 305 12.5 Q307 8 310 8 H314"/></g><path d="M313 4.5 L317.5 8 L313 11.500Z M313 13.5 L317.5 17 L313 20.500Z" fill="#a98bf0"/>
</svg>
</div>
<!-- shared icon symbols -->
<svg width="0" height="0" style="left:0;top:0"><defs>
<symbol id="go" viewBox="0 0 18 18"><path d="M9 1.3 L16.2 5 V13 L9 16.7 L1.8 13 V5 Z M1.8 5 L9 8.7 L16.2 5 M9 8.7 V16.7" stroke="#c4c4c4" stroke-width="1.3" fill="none" stroke-linejoin="round"/></symbol>
<symbol id="pf" viewBox="0 0 18 18"><path d="M9 1 L16.5 4.8 L9 8.6 L1.5 4.800Z" fill="#a6e2ff"/><path d="M1.5 5.8 L8.4 9.4 V17 L1.5 13.300Z" fill="#6cc7f6"/><path d="M16.5 5.8 L9.6 9.4 V17 L16.5 13.300Z" fill="#48aeea"/></symbol>
<symbol id="pfv" viewBox="0 0 18 18"><path d="M9 1 L16.5 4.8 L9 8.6 L1.5 4.800Z" fill="#a6e2ff"/><path d="M1.5 5.8 L8.4 9.4 V17 L1.5 13.300Z" fill="#8a8a8a"/><path d="M2 8 L7.5 13 M2 11 L6 15 M4 7.5 L8.4 11.5" stroke="#4a4a4a" stroke-width="1.1"/><path d="M16.5 5.8 L9.6 9.4 V17 L16.5 13.300Z" fill="#48aeea"/></symbol>
<symbol id="dots" viewBox="0 0 4 16"><circle cx="2" cy="2.5" r="1.6" fill="#c4c4c4"/><circle cx="2" cy="8" r="1.6" fill="#c4c4c4"/><circle cx="2" cy="13.5" r="1.6" fill="#c4c4c4"/></symbol>
<symbol id="lock" viewBox="0 0 13 14"><rect x="1.7" y="7.5" width="9.6" height="5" rx=".8" stroke="#c4c4c4" stroke-width="1.3" fill="none"/><path d="M4.2 4.4 V4.3 Q4.2 2.3 6.3 2.3 H7.6 Q9.7 2.3 9.7 4.3 V7.5" stroke="#c4c4c4" stroke-width="1.3" fill="none"/></symbol>
<symbol id="help" viewBox="0 0 14 14"><circle cx="7" cy="7" r="6.5" fill="#c4c4c4"/><path d="M4.8 5.5 Q4.8 3.3 7 3.3 Q9.2 3.3 9.2 5.3 Q9.2 6.5 7 7.3 V8.5" stroke="#3a3a3a" stroke-width="1.6" fill="none"/><circle cx="7" cy="10.7" r="1" fill="#3a3a3a"/></symbol>
<symbol id="preset" viewBox="0 0 15 15"><path d="M1 4 H14 M1 11 H14" stroke="#c4c4c4" stroke-width="1.4"/><path d="M9.5 1 V7 M5 8 V14" stroke="#c4c4c4" stroke-width="2"/></symbol>
<symbol id="chk" viewBox="0 0 17 17"><path d="M4 8.7 L7.2 11.8 L13.2 4.8" stroke="#e8e8e8" stroke-width="1.9" fill="none"/></symbol>
<symbol id="pick" viewBox="0 0 14 14"><circle cx="7" cy="7" r="5.6" stroke="#c4c4c4" stroke-width="1.3" fill="none"/><circle cx="7" cy="7" r="2" fill="#c4c4c4"/></symbol>
<symbol id="fold" viewBox="0 0 17 14"><path d="M1 2.5 Q1 1.5 2 1.5 H6.5 L8 3.5 H15 Q16 3.5 16 4.5 V12.5 Q16 13.5 15 13.5 H2 Q1 13.5 1 12.500Z" fill="#c8c8c8"/><path d="M1 5.2 H16" stroke="#9a9a9a" stroke-width=".8"/></symbol>
<symbol id="mag" viewBox="0 0 16 16"><circle cx="6.5" cy="6.5" r="4.8" stroke="#c8c8c8" stroke-width="1.4" fill="none"/><path d="M10 10 L15 15" stroke="#c8c8c8" stroke-width="2.2"/></symbol>
</defs></svg>
<!-- hierarchy -->
<div class="a" style="left:861px;top:99px;width:574px;height:30px;background:#141414"></div>
<div class="a" style="left:861px;top:99px;width:137px;height:31px;background:#3c3c3c;border-top:3px solid #2f6aa8;border-radius:3px 3px 0 0"></div>
<svg style="left:872px;top:107px" width="16" height="14" viewBox="0 0 16 14"><path d="M1 1.5 H4 M2.5 0 V3 M6 2.5 H15 M6 7 H15 M6 11.5 H15" stroke="#c4c4c4" stroke-width="1.5"/><rect x="2.5" y="6" width="2.2" height="2.2" fill="#c4c4c4"/><rect x="2.5" y="10.5" width="2.2" height="2.2" fill="#c4c4c4"/></svg>
<div class="t" style="left:893px;top:105px">Hierarchy</div>
<svg style="left:1390px;top:106px" width="13" height="14"><use href="#lock"/></svg><svg style="left:1416px;top:106px" width="4" height="16"><use href="#dots"/></svg>
<div class="a" style="left:861px;top:129px;width:574px;height:25px;background:#3c3c3c"></div>
<svg style="left:868px;top:133px" width="32" height="18" viewBox="0 0 32 18"><path d="M8.5 1 V16 M1 8.5 H16" stroke="#d0d0d0" stroke-width="1.8"/><path d="M20 5.5 H30 L25 11.500Z" fill="#c4c4c4"/></svg>
<div class="a" style="left:1025px;top:132px;width:405px;height:20px;background:#2a2a2a;border:1px solid #222;border-radius:3px"></div>
<svg style="left:1030px;top:136px" width="14" height="12" viewBox="0 0 14 12"><circle cx="4.5" cy="5" r="3" stroke="#b0b0b0" stroke-width="1.4" fill="none"/><path d="M6.8 7.3 L9.8 10.3" stroke="#b0b0b0" stroke-width="1.6"/><path d="M9.5 4 H13.5 L11.5 6.500Z" fill="#b0b0b0"/></svg>
<div class="t" style="left:1048px;top:132px;color:#7c7c7c;font-size:14px">All</div>
<svg style="left:1411px;top:134px" width="17" height="16" viewBox="0 0 17 16"><rect x="0" y="0" width="17" height="16" rx="2" fill="#3e3e3e"/><rect x="4.5" y="2" width="10" height="9.5" rx="1" stroke="#c4c4c4" stroke-width="1.2" fill="none"/><rect x="2" y="8.5" width="5.5" height="5.5" stroke="#c4c4c4" stroke-width="1.2" fill="#3e3e3e"/><path d="M8 8.5 L12 4.5 M9 4.3 H12.2 V7.5" stroke="#c4c4c4" stroke-width="1.2" fill="none"/></svg>
<div class="a" style="left:861px;top:154px;width:574px;height:531px;background:#383838"></div>
<div class="a" style="left:861px;top:175px;width:38px;height:510px;background:#333"></div>
<div class="a" style="left:861px;top:154px;width:574px;height:21px;background:#2d2d2d;border-bottom:1px solid #262626"></div>
<div class="a" style="left:861px;top:495px;width:574px;height:40px;background:#2c5d87"></div><div class="a" style="left:861px;top:495px;width:38px;height:40px;background:#2e5790"></div>
<div class="fold-d" style="left:904px;top:161px"></div>
<svg style="left:919px;top:155px" width="19" height="19" viewBox="0 0 19 19"><path d="M9.5 9.6 L3.3 6 M9.5 9.6 L15.7 6 M9.5 9.6 V17 M3.3 12 V6 L7.8 3.4 M15.7 12 V6 L11.2 3.4 M4.3 14.2 L9.5 17.2 L14.7 14.2" stroke="#f0f0f0" stroke-width="2.3" fill="none" stroke-linejoin="miter"/></svg>
<div class="t b" style="left:942px;top:155px;color:#e0e0e0;letter-spacing:0">demo_scene_FREE*</div>
<svg style="left:1417px;top:157px" width="4" height="15"><use href="#dots"/></svg>
<svg style="left:936.0px;top:176px" width="18" height="18"><use href="#go"/></svg>
<div class="t" style="left:958px;top:175px;color:#c8c8c8">Main Camera</div>
<div class="fold-d" style="left:921px;top:201px"></div>
<svg style="left:936.0px;top:196px" width="18" height="18"><use href="#go"/></svg>
<div class="t" style="left:958px;top:195px;color:#c8c8c8">Grid</div>
<svg style="left:953.5px;top:216px" width="18" height="18"><use href="#go"/></svg>
<div class="t" style="left:976px;top:215px;color:#c8c8c8">Ground</div>
<svg style="left:953.5px;top:236px" width="18" height="18"><use href="#go"/></svg>
<div class="t" style="left:976px;top:235px;color:#c8c8c8">Platforms</div>
<svg style="left:953.5px;top:256px" width="18" height="18"><use href="#go"/></svg>
<div class="t" style="left:976px;top:255px;color:#c8c8c8">Background</div>
<div class="fold-r" style="left:922px;top:279px"></div>
<svg style="left:936.0px;top:276px" width="18" height="18"><use href="#go"/></svg>
<div class="t" style="left:958px;top:275px;color:#c8c8c8">Props</div>
<div class="fold-r" style="left:922px;top:299px"></div>
<svg style="left:936.0px;top:296px" width="18" height="18"><use href="#pfv"/></svg>
<div class="t" style="left:958px;top:295px;color:#78a5e8">Player</div>
<svg style="left:1420px;top:299px" width="8" height="12" viewBox="0 0 8 12"><path d="M1.5 1 L6.5 6 L1.5 11" stroke="#9a9a9a" stroke-width="1.5" fill="none"/></svg>
<svg style="left:936.0px;top:316px" width="18" height="18"><use href="#pf"/></svg>
<div class="t" style="left:958px;top:315px;color:#78a5e8">Burger</div>
<svg style="left:1420px;top:319px" width="8" height="12" viewBox="0 0 8 12"><path d="M1.5 1 L6.5 6 L1.5 11" stroke="#9a9a9a" stroke-width="1.5" fill="none"/></svg>
<svg style="left:936.0px;top:336px" width="18" height="18"><use href="#pf"/></svg>
<div class="t" style="left:958px;top:335px;color:#78a5e8">Coke</div>
<svg style="left:1420px;top:339px" width="8" height="12" viewBox="0 0 8 12"><path d="M1.5 1 L6.5 6 L1.5 11" stroke="#9a9a9a" stroke-width="1.5" fill="none"/></svg>
<svg style="left:936.0px;top:356px" width="18" height="18"><use href="#pf"/></svg>
<div class="t" style="left:958px;top:355px;color:#78a5e8">Coke (1)</div>
<svg style="left:1420px;top:359px" width="8" height="12" viewBox="0 0 8 12"><path d="M1.5 1 L6.5 6 L1.5 11" stroke="#9a9a9a" stroke-width="1.5" fill="none"/></svg>
<svg style="left:936.0px;top:376px" width="18" height="18"><use href="#pf"/></svg>
<div class="t" style="left:958px;top:375px;color:#78a5e8">Coke (2)</div>
<svg style="left:1420px;top:379px" width="8" height="12" viewBox="0 0 8 12"><path d="M1.5 1 L6.5 6 L1.5 11" stroke="#9a9a9a" stroke-width="1.5" fill="none"/></svg>
<div class="fold-d" style="left:921px;top:401px"></div>
<svg style="left:936.0px;top:396px" width="18" height="18"><use href="#go"/></svg>
<div class="t" style="left:958px;top:395px;color:#c8c8c8">InventoryCanvas</div>
<div class="fold-d" style="left:938px;top:421px"></div>
<svg style="left:953.5px;top:416px" width="18" height="18"><use href="#go"/></svg>
<div class="t" style="left:976px;top:415px;color:#c8c8c8">InventoryMenu</div>
<div class="fold-d" style="left:956px;top:441px"></div>
<svg style="left:971.0px;top:436px" width="18" height="18"><use href="#go"/></svg>
<div class="t" style="left:993px;top:435px;color:#c8c8c8">InventorySlots</div>
<svg style="left:988.5px;top:456px" width="18" height="18"><use href="#go"/></svg>
<div class="t" style="left:1011px;top:455px;color:#c8c8c8">ItemSlot</div>
<div class="fold-d" style="left:956px;top:481px"></div>
<svg style="left:971.0px;top:476px" width="18" height="18"><use href="#go"/></svg>
<div class="t" style="left:993px;top:475px;color:#c8c8c8">InventoryDescription</div>
<svg style="left:988.5px;top:496px" width="18" height="18"><use href="#go"/></svg>
<div class="t" style="left:1011px;top:495px;color:#f0f0f0">Panel</div>
<svg style="left:988.5px;top:516px" width="18" height="18"><use href="#go"/></svg>
<div class="t" style="left:1011px;top:515px;color:#f0f0f0">Panel</div>
<svg style="left:936.0px;top:536px" width="18" height="18"><use href="#go"/></svg>
<div class="t" style="left:958px;top:535px;color:#c8c8c8">EventSystem</div>
<div class="a" style="left:901px;top:298px;width:2px;height:16px;background:#3a9af0"></div>
<svg style="left:861px;top:154px" width="574" height="531" viewBox="861 154 574 531"><path d="M1306 399 L1064 500.5 M1335 668 L1070 526" stroke="#f0f0f0" stroke-width="1.4" fill="none"/><path d="M1055 504.5 L1067 496 L1069.5 502.500Z M1061 521.5 L1075 523.5 L1071.5 530Z" fill="#f0f0f0"/></svg>
<!-- inspector -->
<div class="a" style="left:1437px;top:99px;width:481px;height:30px;background:#141414"></div>
<div class="a" style="left:1437px;top:99px;width:135px;height:31px;background:#3c3c3c;border-radius:3px 3px 0 0"></div>
<svg style="left:1450px;top:108px" width="13" height="13" viewBox="0 0 13 13"><circle cx="6.5" cy="6.5" r="6.3" fill="#c8c8c8"/><rect x="5.5" y="5.4" width="2" height="4.8" fill="#3c3c3c"/><circle cx="6.5" cy="3.4" r="1.150" fill="#3c3c3c"/></svg>
<div class="t" style="left:1469px;top:105px">Inspector</div>
<svg style="left:1874px;top:106px" width="13" height="14"><use href="#lock"/></svg><svg style="left:1900px;top:106px" width="4" height="16"><use href="#dots"/></svg>
<div class="a" style="left:1437px;top:129px;width:481px;height:755px;background:#383838"></div>
<div class="a" style="left:1905px;top:129px;width:13px;height:755px;background:#353535;border-left:1px solid #2c2c2c"></div><div class="a" style="left:1907px;top:149px;width:11px;height:638px;background:#5e5e5e;border-radius:5px 0 0 5px"></div>
<div class="a" style="left:1906px;top:134px;width:0;height:0;border-left:5px solid transparent;border-right:5px solid transparent;border-bottom:6px solid #c4c4c4"></div><div class="tri-d" style="left:1906px;top:872px"></div>
<svg style="left:1445px;top:142px" width="35" height="32" viewBox="0 0 35 32"><path d="M13.5 1.5 L25 7.2 V20 L13.5 26 L2 20 V7.2 Z M2 7.2 L13.5 13 L25 7.2 M13.5 13 V26" stroke="#c8c8c8" stroke-width="1.5" fill="none" stroke-linejoin="round"/><path d="M25 26.5 H34 L29.5 31.500Z" fill="#c4c4c4"/></svg>
<div class="chk" style="left:1496px;top:143px"></div><svg style="left:1496px;top:143px" width="17" height="17"><use href="#chk"/></svg>
<div class="inp b" style="left:1521px;top:141px;width:252px;color:#e4e4e4;padding-left:3px;line-height:21px">Panel</div>
<div class="t" style="left:1782px;top:142px">(2)</div>
<div class="chk" style="left:1808px;top:143px"></div>
<div class="t" style="left:1831px;top:142px">Static</div><div class="tri-d" style="left:1886px;top:149px"></div>
<div class="t" style="left:1487px;top:172px">Tag</div><div class="dd" style="left:1520px;top:170px;width:165px">Untagged</div><div class="tri-d" style="left:1668px;top:179px"></div>
<div class="t" style="left:1701px;top:172px">Layer</div><div class="dd" style="left:1746px;top:170px;width:153px">UI</div><div class="tri-d" style="left:1882px;top:179px"></div>
<div class="a" style="left:1437px;top:203px;width:468px;height:1px;background:#1f1f1f"></div>
<div class="a" style="left:1437px;top:204px;width:468px;height:27px;background:#3e3e3e"></div>
<div class="fold-d" style="left:1444px;top:213px"></div>
<svg style="left:1463px;top:209px" width="18" height="18" viewBox="0 0 18 18"><path d="M1 1 H5.5 L1 5.500Z M17 1 V5.5 L12.5 1Z M1 17 V12.5 L5.5 17Z M17 17 H12.5 L17 12.500Z" fill="#c8c8c8"/><path d="M2 2 L7 7 M16 2 L11 7 M2 16 L7 11 M16 16 L11 11" stroke="#c8c8c8" stroke-width="2"/></svg>
<div class="t b" style="left:1512px;top:208px;color:#e4e4e4;letter-spacing:.3px">Rect Transform</div>
<svg style="left:1831px;top:211px" width="14" height="14"><use href="#help"/></svg><svg style="left:1856px;top:210px" width="15" height="15"><use href="#preset"/></svg><svg style="left:1886px;top:210px" width="4" height="16"><use href="#dots"/></svg>
<div class="t" style="left:1471px;top:239px;font-size:13px;letter-spacing:.2px">stretch</div>
<div class="t" style="left:1445px;top:277px;font-size:13px;letter-spacing:.2px;transform:rotate(-90deg);transform-origin:center;width:42px;text-align:center;left:1434px">stretch</div>
<svg style="left:1467px;top:263px" width="51" height="51" viewBox="0 0 51 51"><rect x="4" y="4" width="43" height="43" stroke="#808080" stroke-width=".9" fill="#383838"/><rect x="15.5" y="14.5" width="20" height="20" stroke="#c4c4c4" stroke-width="1.2" fill="none"/><path d="M25.5 16.5 V32.5 M17 24.5 H34" stroke="#2aa8e0" stroke-width="1.3"/><path d="M23 18.5 L25.5 16 L28 18.5 M23 30.5 L25.5 33 L28 30.5 M19 22 L16.5 24.5 L19 27 M32 22 L34.5 24.5 L32 27" stroke="#2aa8e0" stroke-width="1.2" fill="none"/><path d="M22.5 19.5 H28.5 M22.5 29.5 H28.5 M20 21.5 V27.5 M31 21.5 V27.5" stroke="#2aa8e0" stroke-width="1"/><g fill="#f2b01e"><rect x="2.7" y="2.7" width="2.6" height="2.6"/><rect x="45.7" y="2.7" width="2.6" height="2.6"/><rect x="2.7" y="45.7" width="2.6" height="2.6"/><rect x="45.7" y="45.7" width="2.6" height="2.6"/></g></svg>
<div class="t" style="left:1627px;top:240px;color:#c8c8c8">Left</div>
<div class="t" style="left:1719px;top:240px;color:#c8c8c8">Top</div>
<div class="t" style="left:1811px;top:240px;color:#c8c8c8">Pos Z</div>
<div class="inp" style="left:1626px;top:261px;width:88px">0</div>
<div class="inp" style="left:1718px;top:261px;width:88px">0</div>
<div class="inp" style="left:1810px;top:261px;width:88px">0</div>
<div class="t" style="left:1627px;top:286px;color:#c8c8c8">Right</div>
<div class="t" style="left:1719px;top:286px;color:#c8c8c8">Bottom</div>
<div class="inp" style="left:1626px;top:306px;width:88px">0</div>
<div class="inp" style="left:1718px;top:306px;width:88px">0</div>
<div class="btn" style="left:1835px;top:305px;width:29px;height:23px;border-radius:3px 0 0 3px"></div><div class="btn" style="left:1865px;top:305px;width:33px;height:23px;border-radius:0 3px 3px 0"></div>
<svg style="left:1835px;top:305px" width="63" height="23" viewBox="0 0 63 23"><rect x="8.5" y="5.5" width="12" height="12" stroke="#9a9a9a" stroke-width="1.3" stroke-dasharray="3 2" fill="none"/><path d="M41 17.5 V6 H46 Q49.5 6 49.5 9 Q49.5 12 46 12 H41 M45.5 12 L50 17.5" stroke="#9a9a9a" stroke-width="1.4" fill="none"/></svg>
<div class="fold-d" style="left:1445px;top:338px"></div>
<div class="t" style="left:1461px;top:333px;color:#c8c8c8">Anchors</div>
<div class="t" style="left:1479px;top:356px;color:#c8c8c8">Min</div>
<div class="t" style="left:1627px;top:356px;color:#c8c8c8">X</div>
<div class="inp" style="left:1640px;top:355px;width:74px">0</div>
<div class="t" style="left:1719px;top:356px;color:#c8c8c8">Y</div>
<div class="inp" style="left:1732px;top:355px;width:74px">0</div>
<div class="t" style="left:1479px;top:381px;color:#c8c8c8">Max</div>
<div class="t" style="left:1627px;top:381px;color:#c8c8c8">X</div>
<div class="inp" style="left:1640px;top:379px;width:74px">1</div>
<div class="t" style="left:1719px;top:381px;color:#c8c8c8">Y</div>
<div class="inp" style="left:1732px;top:379px;width:74px">1</div>
<div class="t" style="left:1461px;top:408px;color:#c8c8c8">Pivot</div>
<div class="t" style="left:1627px;top:408px;color:#c8c8c8">X</div>
<div class="inp" style="left:1640px;top:406px;width:74px">0.5</div>
<div class="t" style="left:1719px;top:408px;color:#c8c8c8">Y</div>
<div class="inp" style="left:1732px;top:406px;width:74px">0.5</div>
<div class="t" style="left:1461px;top:443px;color:#c8c8c8">Rotation</div>
<div class="t" style="left:1631px;top:443px;color:#c8c8c8">X</div>
<div class="inp" style="left:1648px;top:441px;width:67px">0</div>
<div class="t" style="left:1723px;top:443px;color:#c8c8c8">Y</div>
<div class="inp" style="left:1740px;top:441px;width:67px">0</div>
<div class="t" style="left:1815px;top:443px;color:#c8c8c8">Z</div>
<div class="inp" style="left:1832px;top:441px;width:67px">0</div>
<div class="t" style="left:1461px;top:468px;color:#c8c8c8">Scale</div>
<div class="t" style="left:1631px;top:468px;color:#c8c8c8">X</div>
<div class="inp" style="left:1648px;top:466px;width:67px">1</div>
<div class="t" style="left:1723px;top:468px;color:#c8c8c8">Y</div>
<div class="inp" style="left:1740px;top:466px;width:67px">1</div>
<div class="t" style="left:1815px;top:468px;color:#c8c8c8">Z</div>
<div class="inp" style="left:1832px;top:466px;width:67px">1</div>
<svg style="left:1603px;top:469px" width="18" height="16" viewBox="0 0 18 16"><path d="M7 4.5 H5 Q1.5 4.5 1.5 8 Q1.5 11.5 5 11.5 H7 M11 4.5 H13 Q16.5 4.5 16.5 8 Q16.5 11.5 13 11.5 H11 M6 8 H12" stroke="#c4c4c4" stroke-width="1.4" fill="none"/><path d="M3.5 1.5 L14.5 14.5" stroke="#383838" stroke-width="3"/><path d="M3.5 1.5 L14.5 14.5" stroke="#c4c4c4" stroke-width="1.3"/></svg>
<div class="a" style="left:1437px;top:501px;width:468px;height:1px;background:#1f1f1f"></div>
<div class="a" style="left:1437px;top:502px;width:468px;height:27px;background:#3e3e3e"></div>
<div class="fold-d" style="left:1444px;top:511px"></div>
<svg style="left:1461px;top:507px" width="23" height="16" viewBox="0 0 23 16"><path d="M1 8 Q11.5 -2.5 22 8 Q11.5 18.5 1 8Z" stroke="#c8c8c8" stroke-width="1.5" fill="none"/><circle cx="11.5" cy="8" r="3.6" stroke="#c8c8c8" stroke-width="1.5" fill="none"/><circle cx="11.5" cy="8" r="1.3" fill="#c8c8c8"/></svg>
<div class="t b" style="left:1512px;top:506px;color:#e4e4e4;letter-spacing:.3px">Canvas Renderer</div>
<svg style="left:1831px;top:509px" width="14" height="14"><use href="#help"/></svg><svg style="left:1856px;top:508px" width="15" height="15"><use href="#preset"/></svg><svg style="left:1886px;top:508px" width="4" height="16"><use href="#dots"/></svg>
<div class="t" style="left:1461px;top:536px;color:#c8c8c8">Cull Transparent Mesh</div>
<div class="chk" style="left:1629px;top:537px"></div><svg style="left:1629px;top:537px" width="17" height="17"><use href="#chk"/></svg>
<div class="a" style="left:1437px;top:568px;width:468px;height:1px;background:#1f1f1f"></div>
<div class="a" style="left:1437px;top:569px;width:468px;height:27px;background:#3e3e3e"></div>
<div class="fold-d" style="left:1444px;top:578px"></div>
<svg style="left:1462px;top:573px" width="20" height="18" viewBox="0 0 20 18"><rect x="3" y="3" width="14" height="12" stroke="#c8c8c8" stroke-width="1.4" fill="none"/><path d="M3.5 14.5 L8 9 L11 12 L13.5 10 L16.5 14.500Z" fill="#c8c8c8"/><circle cx="13" cy="6.8" r="1.4" fill="#c8c8c8"/><g fill="#c8c8c8"><rect x="1" y="1" width="3.4" height="3.4"/><rect x="15.6" y="1" width="3.4" height="3.4"/><rect x="1" y="13.6" width="3.4" height="3.4"/><rect x="15.6" y="13.6" width="3.4" height="3.4"/></g></svg>
<div class="chk" style="left:1487px;top:574px"></div><svg style="left:1487px;top:574px" width="17" height="17"><use href="#chk"/></svg>
<div class="t b" style="left:1512px;top:573px;color:#e4e4e4;letter-spacing:.3px">Image</div>
<svg style="left:1831px;top:576px" width="14" height="14"><use href="#help"/></svg><svg style="left:1856px;top:575px" width="15" height="15"><use href="#preset"/></svg><svg style="left:1886px;top:575px" width="4" height="16"><use href="#dots"/></svg>
<div class="t" style="left:1461px;top:603px;color:#c8c8c8">Source Image</div>
<div class="inp" style="left:1629px;top:601px;width:269px;padding-left:20px;color:#dcdcdc">Background</div><div class="a" style="left:1875px;top:602px;width:22px;height:20px;background:#3a3a3a;border-radius:0 2px 2px 0"></div><svg style="left:1879px;top:605px" width="14" height="14"><use href="#pick"/></svg>
<svg style="left:1633px;top:605px" width="15" height="15" viewBox="0 0 15 15"><rect x="2.5" y="2.5" width="10" height="10" stroke="#b79cf5" stroke-width="1.3" fill="none"/><rect x="5.5" y="5.5" width="4" height="4" fill="#e8e0ff"/><g fill="#b79cf5"><rect x="1" y="1" width="3" height="3"/><rect x="11" y="1" width="3" height="3"/><rect x="1" y="11" width="3" height="3"/><rect x="11" y="11" width="3" height="3"/></g></svg>
<div class="t" style="left:1461px;top:628px;color:#c8c8c8">Color</div>
<div class="a" style="left:1629px;top:626px;width:269px;height:22px;background:#2a2a2a;border:1px solid #212121;border-radius:3px"></div><div class="a" style="left:1631px;top:627px;width:244px;height:20px;background:#fff"></div><div class="a" style="left:1727px;top:643px;width:148px;height:4px;background:#000"></div>
<svg style="left:1879px;top:629px" width="16" height="16" viewBox="0 0 16 16"><path d="M2 14 L3 10.5 L9.5 4 L12 6.5 L5.5 13Z" fill="#c4c4c4"/><path d="M9 3 L13 7" stroke="#c4c4c4" stroke-width="2"/><path d="M11 5 L14 2" stroke="#c4c4c4" stroke-width="3.2" stroke-linecap="round"/></svg>
<div class="t" style="left:1461px;top:653px;color:#c8c8c8">Material</div>
<div class="inp" style="left:1629px;top:651px;width:269px;color:#b4b4b4">None (Material)</div><div class="a" style="left:1875px;top:652px;width:22px;height:20px;background:#3a3a3a;border-radius:0 2px 2px 0"></div><svg style="left:1879px;top:655px" width="14" height="14"><use href="#pick"/></svg>
<div class="t" style="left:1461px;top:678px;color:#c8c8c8">Raycast Target</div>
<div class="chk" style="left:1629px;top:679px"></div><svg style="left:1629px;top:679px" width="17" height="17"><use href="#chk"/></svg>
<div class="fold-r" style="left:1447px;top:706px"></div>
<div class="t" style="left:1461px;top:703px;color:#c8c8c8">Raycast Padding</div>
<div class="t" style="left:1461px;top:731px;color:#c8c8c8">Maskable</div>
<div class="chk" style="left:1629px;top:731px"></div><svg style="left:1629px;top:731px" width="17" height="17"><use href="#chk"/></svg>
<div class="t" style="left:1464px;top:756px;color:#c8c8c8">Image Type</div>
<div class="dd" style="left:1633px;top:755px;width:261px">Sliced</div><div class="tri-d" style="left:1877px;top:763px"></div>
<div class="t" style="left:1483px;top:781px;color:#c8c8c8">Fill Center</div>
<div class="chk" style="left:1633px;top:781px"></div><svg style="left:1633px;top:781px" width="17" height="17"><use href="#chk"/></svg>
<div class="t" style="left:1483px;top:806px;width:149px;overflow:hidden">Pixels Per Unit Multiplier</div>
<div class="inp" style="left:1633px;top:804px;width:261px">1</div>
<div class="a" style="left:1437px;top:837px;width:468px;height:1px;background:#1f1f1f"></div>
<div class="a" style="left:1438px;top:838px;width:467px;height:46px;background:#3c3c3c;overflow:hidden"><div class="a" style="left:19px;top:8px;width:40px;height:40px;background:#4a4a4a"></div><div class="a" style="left:24px;top:13px;width:30px;height:30px;background:#fff"></div><div class="t" style="left:68px;top:6px;font-size:15.5px;letter-spacing:.8px;color:#cfcfcf">Default UI Material (Material)</div><div class="t" style="left:68px;top:39px;color:#8a8a8a">Shader</div><div class="dd" style="left:131px;top:41px;width:205px;color:#a0a0a0">UI/Default</div><div class="btn" style="left:346px;top:36px;width:55px;height:22px"></div><div class="t" style="left:355px;top:35px;color:#dcdcdc">Edit...</div><div class="btn" style="left:407px;top:39px;width:52px;height:22px"></div><svg style="left:429px;top:9px" width="14" height="14"><use href="#help"/></svg><svg style="left:454px;top:8px" width="4" height="16"><use href="#dots"/></svg></div>
<div class="a" style="left:1437px;top:884px;width:481px;height:29px;background:#3c3c3c;border-top:1px solid #232323;border-bottom:1px solid #232323"></div>
<div class="a" style="left:1443px;top:886px;width:1px;height:25px;background:#2c2c2c"></div><div class="a" style="left:1532px;top:886px;width:1px;height:25px;background:#2c2c2c"></div><div class="a" style="left:1898px;top:886px;width:1px;height:25px;background:#2c2c2c"></div>
<div class="t b" style="left:1447px;top:889px;color:#e4e4e4">2 Images</div><div class="tri-d" style="left:1517px;top:896px"></div>
<div class="a" style="left:1536px;top:896px;width:360px;height:1px;background:#5a5a5a"></div><div class="a" style="left:1536px;top:901px;width:360px;height:1px;background:#5a5a5a"></div>
<svg style="left:1907px;top:891px" width="4" height="16"><use href="#dots"/></svg>
<div class="a" style="left:1437px;top:913px;width:481px;height:191px;background:#303030"></div><div class="a" style="left:1437px;top:1104px;width:481px;height:9px;background:#383838;border-top:1px solid #262626"></div>
<svg style="left:1504px;top:938px" width="121" height="121" viewBox="0 0 121 121"><defs><clipPath id="c1504"><rect width="121" height="121"/></clipPath><filter id="tb1504"><feGaussianBlur stdDeviation="1.3"/></filter></defs><rect width="121" height="121" fill="#5c5c5c"/><path d="M0 0h20.200v20.200h-20.200zM40 0h20.200v20.200h-20.200zM80 0h20.200v20.200h-20.200zM20 20h20.200v20.200h-20.200zM60 20h20.200v20.200h-20.200zM101 20h20.200v20.200h-20.200zM0 40h20.200v20.200h-20.200zM40 40h20.200v20.200h-20.200zM80 40h20.200v20.200h-20.200zM20 60h20.200v20.200h-20.200zM60 60h20.200v20.200h-20.200zM101 60h20.200v20.200h-20.200zM0 80h20.200v20.200h-20.200zM40 80h20.200v20.200h-20.200zM80 80h20.200v20.200h-20.200zM20 101h20.200v20.200h-20.200zM60 101h20.200v20.200h-20.200zM101 101h20.200v20.200h-20.200z" fill="#474747"/><g filter="url(#tb1504)"><rect x="7.5" y="7.5" width="106" height="106" rx="29" fill="#3a3a3a"/><rect x="11" y="11" width="99" height="99" rx="25" fill="#dadada"/></g><path d="M36.5 0V121M82.5 0V121M0 39.500H121M0 84.500H121" stroke="#fff" stroke-width=".9" fill="none" opacity=".85"/><path d="M36.5 0V121M82.5 0V121M0 39.500H121M0 84.500H121" stroke="#2c2c2c" stroke-width=".9" stroke-dasharray="9 7" fill="none"/><rect x=".5" y=".5" width="120" height="120" stroke="#6a6a6a" fill="none"/></svg>
<svg style="left:1732px;top:938px" width="121" height="121" viewBox="0 0 121 121"><defs><clipPath id="c1732"><rect width="121" height="121"/></clipPath><filter id="tb1732"><feGaussianBlur stdDeviation="1.3"/></filter></defs><rect width="121" height="121" fill="#5c5c5c"/><path d="M0 0h20.200v20.200h-20.200zM40 0h20.200v20.200h-20.200zM80 0h20.200v20.200h-20.200zM20 20h20.200v20.200h-20.200zM60 20h20.200v20.200h-20.200zM101 20h20.200v20.200h-20.200zM0 40h20.200v20.200h-20.200zM40 40h20.200v20.200h-20.200zM80 40h20.200v20.200h-20.200zM20 60h20.200v20.200h-20.200zM60 60h20.200v20.200h-20.200zM101 60h20.200v20.200h-20.200zM0 80h20.200v20.200h-20.200zM40 80h20.200v20.200h-20.200zM80 80h20.200v20.200h-20.200zM20 101h20.200v20.200h-20.200zM60 101h20.200v20.200h-20.200zM101 101h20.200v20.200h-20.200z" fill="#474747"/><g filter="url(#tb1732)"><rect x="7.5" y="7.5" width="106" height="106" rx="29" fill="#3a3a3a"/><rect x="11" y="11" width="99" height="99" rx="25" fill="#dadada"/></g><path d="M36.5 0V121M82.5 0V121M0 39.500H121M0 84.500H121" stroke="#fff" stroke-width=".9" fill="none" opacity=".85"/><path d="M36.5 0V121M82.5 0V121M0 39.500H121M0 84.500H121" stroke="#2c2c2c" stroke-width=".9" stroke-dasharray="9 7" fill="none"/><rect x=".5" y=".5" width="120" height="120" stroke="#6a6a6a" fill="none"/></svg>
<div class="t" style="left:1504px;top:1061px;width:121px;text-align:center;font-size:12.5px;letter-spacing:.2px;color:#dcdcdc">Panel</div><div class="t" style="left:1732px;top:1061px;width:121px;text-align:center;font-size:12.5px;letter-spacing:.2px;color:#dcdcdc">Panel</div>
<div class="t b" style="left:1438px;top:1080px;width:480px;text-align:center;color:#ececec;text-shadow:1px 1px 1px #000;letter-spacing:.35px">Previewing 2 of 2 Objects</div>
<!-- game / console -->
<div class="a" style="left:0;top:688px;width:958px;height:30px;background:#141414"></div>
<svg style="left:13px;top:695px" width="13" height="15" viewBox="0 0 13 15"><rect x=".7" y=".7" width="11.6" height="13.6" rx="1" stroke="#c4c4c4" stroke-width="1.4" fill="none"/><path d="M1 4.2 H12 M3 7 H10 M3 9.5 H10 M3 12 H10" stroke="#c4c4c4" stroke-width="1.3"/><rect x="1" y="1" width="11" height="3.2" fill="#c4c4c4"/></svg>
<div class="t" style="left:31px;top:693px">Console</div>
<div class="a" style="left:125px;top:687px;width:109px;height:31px;background:#3c3c3c;border-radius:3px 3px 0 0"></div>
<svg style="left:136px;top:697px" width="18" height="11" viewBox="0 0 18 11"><rect x=".5" y=".5" width="17" height="10" rx="5" fill="#c8c8c8"/><path d="M3.5 5.5 H7.5 M5.5 3.5 V7.5" stroke="#3c3c3c" stroke-width="1.3"/><circle cx="12.8" cy="5.5" r="1.7" fill="#3c3c3c"/></svg>
<div class="t" style="left:157px;top:693px">Game</div>
<svg style="left:939px;top:695px" width="4" height="16"><use href="#dots"/></svg>
<div class="a" style="left:0;top:717px;width:958px;height:26px;background:#3c3c3c;border-bottom:1px solid #2a2a2a"></div>
<div class="t" style="left:5px;top:721px;color:#c8c8c8;">Game</div>
<div class="tri-d" style="left:97px;top:727px"></div>
<div class="a" style="left:113px;top:717px;width:1px;height:25px;background:#303030"></div>
<div class="t" style="left:125px;top:721px;color:#c8c8c8;">Display 1</div>
<div class="tri-d" style="left:204px;top:727px"></div>
<div class="a" style="left:219px;top:717px;width:1px;height:25px;background:#303030"></div>
<div class="t" style="left:225px;top:721px;color:#c8c8c8;">Full HD (1920x1080)</div>
<div class="tri-d" style="left:404px;top:727px"></div>
<div class="a" style="left:420px;top:717px;width:1px;height:25px;background:#303030"></div>
<div class="t" style="left:429px;top:721px;color:#c8c8c8;">Scale</div>
<div class="a" style="left:481px;top:730px;width:46px;height:2px;background:#5e5e5e"></div><div class="a" style="left:475px;top:725px;width:12px;height:12px;border-radius:6px;background:#999"></div>
<div class="t" style="left:535px;top:721px;color:#c8c8c8;">0.34x</div>
<div class="a" style="left:586px;top:717px;width:1px;height:25px;background:#303030"></div>
<div class="t" style="left:591px;top:721px;color:#c8c8c8;">Play Maximized</div>
<div class="tri-d" style="left:708px;top:727px"></div>
<div class="a" style="left:724px;top:717px;width:1px;height:25px;background:#303030"></div>
<svg style="left:731px;top:721px" width="18" height="19" viewBox="0 0 18 19"><ellipse cx="9" cy="11" rx="5" ry="6.5" fill="#c4c4c4"/><circle cx="9" cy="4" r="2.7" fill="#c4c4c4"/><path d="M2 6 L4.5 8.5 M16 6 L13.5 8.5 M1 11.5 H4 M17 11.5 H14 M2 17.5 L4.5 15 M16 17.5 L13.5 15 M6 1 L7.5 3 M12 1 L10.5 3" stroke="#c4c4c4" stroke-width="1.3"/></svg>
<div class="a" style="left:756px;top:717px;width:1px;height:25px;background:#303030"></div>
<svg style="left:763px;top:722px" width="19" height="16" viewBox="0 0 19 16"><path d="M1 5 H4 L9 1 V15 L4 11 H1Z" fill="#dcdcdc"/><path d="M11.5 5 Q13 8 11.5 11 M14 2.5 Q17.5 8 14 13.5" stroke="#dcdcdc" stroke-width="1.5" fill="none"/></svg>
<div class="a" style="left:788px;top:717px;width:1px;height:25px;background:#303030"></div>
<svg style="left:796px;top:724px" width="18" height="13" viewBox="0 0 18 13"><rect x=".7" y=".7" width="16.6" height="11.6" rx="1" stroke="#d0d0d0" stroke-width="1.4" fill="none"/><path d="M1 4.5 H17 M1 8 H17 M4.5 1 V8 M8 1 V8 M11 1 V8 M14 1 V8 M4 8 V12 M14 8 V12" stroke="#d0d0d0" stroke-width="1.2"/></svg>
<div class="a" style="left:821px;top:717px;width:1px;height:25px;background:#303030"></div>
<div class="t" style="left:828px;top:721px;color:#c8c8c8;">Stats</div>
<div class="a" style="left:870px;top:717px;width:1px;height:25px;background:#303030"></div>
<div class="t" style="left:876px;top:721px;color:#c8c8c8;">Gizmos</div>
<div class="a" style="left:936px;top:717px;width:1px;height:25px;background:#303030"></div>
<div class="tri-d" style="left:942px;top:727px"></div>
<div class="a" style="left:0;top:743px;width:958px;height:370px;background:#262626;box-shadow:inset 0 3px 4px -2px #1c1c1c"></div>
<div class="a" style="left:151px;top:743px;width:656px;height:368px;background:#d2d2d2"></div>
<!-- project -->
<div class="a" style="left:961px;top:688px;width:474px;height:30px;background:#141414"></div>
<div class="a" style="left:961px;top:687px;width:119px;height:31px;background:#3c3c3c;border-radius:3px 3px 0 0"></div>
<svg style="left:973px;top:696px" width="16" height="13" viewBox="0 0 16 13"><path d="M.5 1.5 Q.5 .5 1.5 .5 H6 L7.5 2.5 H14.5 Q15.5 2.5 15.5 3.5 V11.5 Q15.5 12.5 14.5 12.5 H1.5 Q.5 12.5 .5 11.500Z" fill="#c8c8c8"/></svg>
<div class="t" style="left:993px;top:693px">Project</div>
<svg style="left:1390px;top:695px" width="13" height="14"><use href="#lock"/></svg><svg style="left:1416px;top:695px" width="4" height="16"><use href="#dots"/></svg>
<div class="a" style="left:961px;top:717px;width:474px;height:26px;background:#3c3c3c;border-bottom:1px solid #2a2a2a"></div>
<svg style="left:968px;top:721px" width="34" height="18" viewBox="0 0 34 18"><path d="M8.5 1 V16 M1 8.5 H16" stroke="#d0d0d0" stroke-width="1.8"/><path d="M22 5.5 H32 L27 11.500Z" fill="#c4c4c4"/></svg>
<div class="a" style="left:1017px;top:720px;width:232px;height:20px;background:#2a2a2a;border:1px solid #222;border-radius:3px"></div>
<svg style="left:1022px;top:725px" width="11" height="11" viewBox="0 0 11 11"><circle cx="4" cy="4" r="2.8" stroke="#c4c4c4" stroke-width="1.4" fill="none"/><path d="M6.2 6.2 L10 10" stroke="#c4c4c4" stroke-width="1.6"/></svg>
<svg style="left:1231px;top:722px" width="17" height="16" viewBox="0 0 17 16"><rect x="0" y="0" width="17" height="16" rx="2" fill="#3a3a3a"/><rect x="4.5" y="2" width="10" height="9.5" rx="1" stroke="#c4c4c4" stroke-width="1.2" fill="none"/><rect x="2" y="8.5" width="5.5" height="5.5" stroke="#c4c4c4" stroke-width="1.2" fill="#3a3a3a"/><path d="M8 8.5 L12 4.5 M9 4.3 H12.2 V7.5" stroke="#c4c4c4" stroke-width="1.2" fill="none"/></svg>
<div class="a" style="left:1253px;top:717px;width:1px;height:25px;background:#303030"></div>
<div class="a" style="left:1286px;top:717px;width:1px;height:25px;background:#303030"></div>
<div class="a" style="left:1318px;top:717px;width:1px;height:25px;background:#303030"></div>
<div class="a" style="left:1350px;top:717px;width:1px;height:25px;background:#303030"></div>
<div class="a" style="left:1383px;top:717px;width:1px;height:25px;background:#303030"></div>
<svg style="left:1261px;top:721px" width="18" height="18" viewBox="0 0 18 18"><rect x="1" y="1" width="6.5" height="6.5" fill="#c8c8c8"/><path d="M12.5 2 L17 9 H8Z" fill="#c8c8c8"/><circle cx="5" cy="13" r="3.7" fill="#c8c8c8"/></svg>
<svg style="left:1294px;top:722px" width="17" height="16" viewBox="0 0 17 16"><path d="M7.5 2.5 L14 1.5 L15.5 3 L14.5 9.5 L8 15 L1.5 8.500Z" fill="#c8c8c8"/><circle cx="12" cy="5" r="1.4" fill="#3c3c3c"/></svg>
<svg style="left:1325px;top:721px" width="18" height="18" viewBox="0 0 18 18"><path d="M5.5 1 H12.5 L17 5.5 V12.5 L12.5 17 H5.5 L1 12.5 V5.500Z" fill="#d0d0d0"/><rect x="8" y="4" width="2.2" height="6.5" fill="#3c3c3c"/><rect x="8" y="12" width="2.2" height="2.2" fill="#3c3c3c"/></svg>
<svg style="left:1358px;top:721px" width="18" height="17" viewBox="0 0 18 17"><path d="M9 .8 L11.5 6 L17.2 6.7 L13 10.6 L14.1 16.2 L9 13.4 L3.9 16.2 L5 10.6 L.8 6.7 L6.5 6Z" fill="#9a9a9a"/></svg>
<svg style="left:1391px;top:724px" width="19" height="12" viewBox="0 0 19 12"><path d="M.8 6 Q9.5 -3 18.2 6 Q9.5 15 .8 6Z" fill="#6a6a6a"/><circle cx="9.5" cy="5.5" r="3" fill="#3c3c3c"/></svg>
<div class="t" style="left:1412px;top:720px;color:#b4b4b4;font-size:14.500px;letter-spacing:0">31</div>
<div class="a" style="left:961px;top:743px;width:259px;height:370px;background:#383838"></div>
<div class="a" style="left:1220px;top:743px;width:1px;height:370px;background:#242424"></div>
<div class="a" style="left:1221px;top:743px;width:214px;height:370px;background:#333"></div>
<div class="a" style="left:1221px;top:743px;width:214px;height:26px;background:#3c3c3c"></div>
<div class="a" style="left:1221px;top:1088px;width:214px;height:25px;background:#3c3c3c"></div>
<div class="a" style="left:1352px;top:1099px;width:63px;height:2px;background:#5e5e5e"></div><div class="a" style="left:1346px;top:1094px;width:12px;height:12px;border-radius:6px;background:#999"></div>
<div class="t" style="left:1226px;top:745px;color:#b8b8b8">Assets</div><div class="t b" style="left:1296px;top:745px;color:#e0e0e0">Prefabs</div>
<svg style="left:1281px;top:750px" width="8" height="12" viewBox="0 0 8 12"><path d="M1.5 1 L6.5 6 L1.5 11" stroke="#b0b0b0" stroke-width="1.5" fill="none"/></svg><svg style="left:1361px;top:750px" width="8" height="12" viewBox="0 0 8 12"><path d="M1.5 1 L6.5 6 L1.5 11" stroke="#b0b0b0" stroke-width="1.5" fill="none"/></svg>
<svg style="left:1240px;top:771px" width="18" height="18"><use href="#pf"/></svg>
<div class="t" style="left:1263px;top:770px;color:#c8c8c8;">Burger</div>
<svg style="left:1240px;top:791px" width="18" height="18"><use href="#pf"/></svg>
<div class="t" style="left:1263px;top:790px;color:#c8c8c8;">Coke</div>
<div class="a" style="left:961px;top:901px;width:259px;height:20px;background:#4d4d4d"></div>
<div class="fold-d" style="left:966px;top:749px"></div><svg style="left:983px;top:744px" width="16" height="16" viewBox="0 0 18 17"><path d="M9 .8 L11.5 6 L17.2 6.7 L13 10.6 L14.1 16.2 L9 13.4 L3.9 16.2 L5 10.6 L.8 6.7 L6.5 6Z" fill="#c8c8c8"/></svg>
<div class="t b" style="left:1005px;top:742px;color:#e0e0e0">Favorites</div>
<svg style="left:1000px;top:764px" width="16" height="16"><use href="#mag"/></svg>
<div class="t" style="left:1021px;top:762px;color:#c8c8c8;">All Materials</div>
<svg style="left:1000px;top:784px" width="16" height="16"><use href="#mag"/></svg>
<div class="t" style="left:1021px;top:782px;color:#c8c8c8;">All Models</div>
<svg style="left:1000px;top:804px" width="16" height="16"><use href="#mag"/></svg>
<div class="t" style="left:1021px;top:802px;color:#c8c8c8;">All Prefabs</div>
<div class="fold-d" style="left:966px;top:848px"></div><svg style="left:983px;top:844px" width="18" height="14" viewBox="0 0 18 14"><path d="M.5 12.5 V2 Q.5 1 1.5 1 H5.5 L7 3 H13 Q14 3 14 4 V5" stroke="#c8c8c8" stroke-width="1.2" fill="none"/><path d="M3.5 5.5 H17.5 L14.5 13.2 H.8Z" fill="#c8c8c8"/></svg>
<div class="t b" style="left:1005px;top:841px;color:#e0e0e0">Assets</div>
<div class="fold-r" style="left:986px;top:865px"></div>
<svg style="left:999px;top:864px" width="17" height="14"><use href="#fold"/></svg>
<div class="t" style="left:1021px;top:861px;width:199px;overflow:hidden">Medieval_pixel_art_asset_FREE</div>
<svg style="left:999px;top:884px" width="17" height="14"><use href="#fold"/></svg>
<div class="t" style="left:1021px;top:881px;width:199px;overflow:hidden">Objectes</div>
<svg style="left:999px;top:904px" width="17" height="14"><use href="#fold"/></svg>
<div class="t" style="left:1021px;top:901px;width:199px;overflow:hidden">Prefabs</div>
<svg style="left:999px;top:924px" width="17" height="14"><use href="#fold"/></svg>
<div class="t" style="left:1021px;top:921px;width:199px;overflow:hidden">Scenes</div>
<div class="fold-r" style="left:986px;top:945px"></div>
<svg style="left:999px;top:944px" width="17" height="14"><use href="#fold"/></svg>
<div class="t" style="left:1021px;top:941px;width:199px;overflow:hidden">Settings</div>
<div class="fold-r" style="left:986px;top:965px"></div>
<svg style="left:999px;top:964px" width="17" height="14"><use href="#fold"/></svg>
<div class="t" style="left:1021px;top:961px;width:199px;overflow:hidden">Wizard - 2D Character</div>
<div class="fold-r" style="left:967px;top:985px"></div><svg style="left:983px;top:984px" width="17" height="14"><use href="#fold"/></svg><div class="t b" style="left:1005px;top:981px;color:#e0e0e0">Packages</div>
<!-- status bar -->
<div class="a" style="left:0;top:1113px;width:1918px;height:24px;background:#141414"></div>
<div class="a" style="left:1821px;top:1113px;width:1px;height:24px;background:#242424"></div>
<div class="a" style="left:1853px;top:1113px;width:1px;height:24px;background:#242424"></div>
<div class="a" style="left:1886px;top:1113px;width:1px;height:24px;background:#242424"></div>
<svg style="left:1827px;top:1117px" width="20" height="20" viewBox="0 0 20 20"><ellipse cx="10" cy="12" rx="4.5" ry="6" fill="#c4c4c4"/><circle cx="10" cy="5.5" r="2.5" fill="#c4c4c4"/><path d="M3.5 7.5 L6 10 M16.5 7.5 L14 10 M3 13 H5.5 M17 13 H14.5 M3.5 18.5 L6 16 M16.5 18.5 L14 16" stroke="#c4c4c4" stroke-width="1.3"/><path d="M3 3 L17 19" stroke="#141414" stroke-width="3"/><path d="M3 3 L17 19" stroke="#c4c4c4" stroke-width="1.4"/></svg>
<svg style="left:1860px;top:1117px" width="20" height="20" viewBox="0 0 20 20"><ellipse cx="10" cy="5" rx="7" ry="3" fill="#c4c4c4"/><path d="M3 7.5 Q10 12 17 7.5 V10 Q10 14.5 3 10Z M3 12 Q10 16.5 17 12 V14.5 Q10 19 3 14.500Z" fill="#c4c4c4"/><path d="M4 3 L17 19" stroke="#141414" stroke-width="3"/><path d="M4 3 L17 19" stroke="#c4c4c4" stroke-width="1.4"/></svg>
<svg style="left:1893px;top:1118px" width="18" height="18" viewBox="0 0 18 18"><circle cx="9" cy="9" r="7.6" stroke="#c4c4c4" stroke-width="1.3" fill="none"/><path d="M5.5 9.2 L8 11.7 L12.7 6.5" stroke="#c4c4c4" stroke-width="1.6" fill="none"/></svg>
</div></body></html>
